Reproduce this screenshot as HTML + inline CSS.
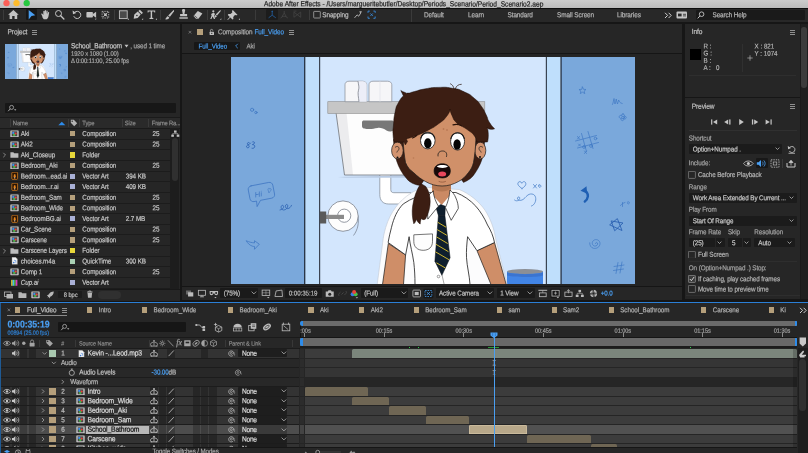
<!DOCTYPE html>
<html><head><meta charset="utf-8"><title>Adobe After Effects</title>
<style>
html,body{margin:0;padding:0;background:#161616;}
body{width:808px;height:453px;overflow:hidden;position:relative;font-family:"Liberation Sans",sans-serif;}
#r{position:absolute;left:0;top:0;width:808px;height:453px;overflow:hidden;background:#161616;will-change:transform;}
#r div,#r svg{position:absolute;}
.t{white-space:pre;transform-origin:50% 50%;-webkit-text-stroke:.18px currentColor;}
</style></head><body><div id="r">
<div style="left:0px;top:0px;width:808px;height:7.5px;background:linear-gradient(#cdcdcd,#bcbcbc);"></div>
<svg style="left:0;top:0" width="40" height="7" viewBox="0 0 40 7"><circle cx="6.500" cy="3.100" r="3.200" fill="#fc5f57"/><circle cx="16.500" cy="3.100" r="3.200" fill="#fdbc2e"/><circle cx="26.700" cy="3.100" r="3.200" fill="#28c840"/></svg>
<div class="t" style="left:264px;top:0px;height:8px;line-height:8px;font-size:6.63px;color:#222;transform:translate(0px,0.1px) scaleY(1.12) rotate(.03deg);">Adobe After Effects - /Users/margueritebutler/Desktop/Periods_Scenario/Period_Scenario2.aep</div>
<div style="left:0px;top:7.5px;width:808px;height:1px;background:#0e0e0e;"></div>
<div style="left:0px;top:8.5px;width:808px;height:13px;background:#282828;"></div>
<div style="left:3.3px;top:9.7px;width:0.8px;height:10.5px;background:#3b3b3b;"></div>
<div style="left:114.3px;top:9.7px;width:0.8px;height:10.5px;background:#3b3b3b;"></div>
<div style="left:160.3px;top:9.7px;width:0.8px;height:10.5px;background:#3b3b3b;"></div>
<div style="left:207px;top:9.7px;width:0.8px;height:10.5px;background:#3b3b3b;"></div>
<div style="left:224.4px;top:9.7px;width:0.8px;height:10.5px;background:#3b3b3b;"></div>
<div style="left:254.6px;top:9.7px;width:0.8px;height:10.5px;background:#3b3b3b;"></div>
<div style="left:309px;top:9.7px;width:0.8px;height:10.5px;background:#3b3b3b;"></div>
<div style="left:411.3px;top:8.5px;width:0.8px;height:13px;background:#3b3b3b;"></div>
<div style="left:25.7px;top:9.3px;width:11.6px;height:11.2px;background:#171717;border-radius:1px;"></div>
<div style="left:266.2px;top:9.3px;width:12.2px;height:11.2px;background:#1c1c1c;border-radius:1px;"></div>
<svg style="left:0px;top:7px;" width="420" height="16" viewBox="0 7 420 16"><g transform="translate(13.4 14.7)"><path d="M0-4.600l5.300 4.600h-1.500v4.300h-2.600v-3h-2.400v3h-2.600v-4.300h-1.500z" fill="#c4c4c4"/></g><g transform="translate(31.5 14.7)"><path d="M-2.800-4.800l6.600 5.400l-3.800.6l-2.800 3.600z" fill="#4a9ff2"/></g><g transform="translate(45.4 14.7)"><path transform="translate(0 .5) scale(.86)" d="M-3.600 1.200l-1.300-2.600c.6-.8 1.500-.5 1.900.3l.6.900v-4.300c.3-.8 1.200-.8 1.400 0v3l.2-4c.4-.8 1.300-.8 1.500 0v4l.5-3.500c.4-.7 1.200-.6 1.400.2l-.2 3.600l.8-2.300c.5-.6 1.200-.3 1.200.5l-.8 4.300c-.3 1.700-1.100 2.900-2.100 3.500h-3.300c-.8-.7-1.400-1.700-1.800-2.600z" fill="#c4c4c4"/></g><g transform="translate(59.5 14.7)"><circle cx="-1" cy="-1.200" r="3" fill="none" stroke="#c4c4c4" stroke-width="1"/><path d="M1.200 1l3.200 3.300" stroke="#c4c4c4" stroke-width="1.300" stroke-linecap="round"/></g><g transform="translate(77.2 14.7)"><path d="M-2.600-2.300a3.600 3.600 0 1 1-.8 3.800" fill="none" stroke="#c4c4c4" stroke-width="1"/><path d="M-4.600-4.200l.4 3.800l3.400-1.400z" fill="#c4c4c4"/></g><g transform="translate(91.2 14.7)"><rect x="-4.800" y="-2.800" width="6.500" height="5.600" rx="0.800" fill="#c4c4c4"/><path d="M1.700-.8l3.200-2.200v6l-3.200-2.200z" fill="#c4c4c4"/><path d="M5 4.800h-1.400l1.400-1.400z" fill="#c4c4c4"/></g><g transform="translate(105.4 14.7)"><rect x="-3.300" y="-3.300" width="6.600" height="6.600" fill="none" stroke="#c4c4c4" stroke-width="0.800" stroke-dasharray="1.300 1"/><path d="M-2.200-2.200l4.400 4.400M2.200-2.200l-4.400 4.400" stroke="#c4c4c4" stroke-width="0.900"/><rect x="-1.200" y="-1.200" width="2.400" height="2.400" fill="#c4c4c4"/></g><g transform="translate(123.3 14.7)"><rect x="-3.900" y="-3.900" width="7.800" height="7.800" fill="#4a4a4a" stroke="#c4c4c4" stroke-width="0.900"/><path d="M5.600 5h-1.400l1.400-1.400z" fill="#c4c4c4"/></g><g transform="translate(137.5 14.7)"><path d="M-3.800 4l.6-4.200l3.400-3l3 3l-3 3.400z" fill="#c4c4c4"/><path d="M.8-3.800l1.600-1.200l3 3l-1.200 1.600z" fill="#c4c4c4"/><circle cx="-.6" cy=".8" r=".8" fill="#2b2b2b"/><path d="M5.600 5h-1.400l1.400-1.400z" fill="#c4c4c4"/></g><g transform="translate(151.4 14.7)"><path d="M-3.800-4.200h7.600v2h-.8l-.3-1h-2v6.300l1.200.3v.8h-3.800v-.8l1.200-.3v-6.300h-2l-.3 1h-.8z" fill="#c4c4c4"/><path d="M5.600 5h-1.400l1.400-1.400z" fill="#c4c4c4"/></g><g transform="translate(169.4 14.7)"><path d="M4.200-4.600c.6.300.6.900.3 1.400l-4 5.300l-1.700-1.200z" fill="#c4c4c4"/><path d="M-1.700 1.500l1.600 1.300c-.3 1.500-2 2.200-4.300 1.800c1.300-.8 1.300-2.600 2.700-3.100z" fill="#c4c4c4"/></g><g transform="translate(183.6 14.7)"><path d="M-1.400-3.600a1.500 1.500 0 1 1 2.800 0l-.6 3h2.700v2.200h-7v-2.200h2.700z" fill="#c4c4c4"/><rect x="-4.200" y="2.600" width="8.400" height="1.400" fill="#c4c4c4"/></g><g transform="translate(197.9 14.7)"><path d="M-4.400 1.200l4.300-5l4.600 2.500l-4 5.400h-2.400z" fill="#c4c4c4"/><path d="M-3.600 1l3 2.300" stroke="#2b2b2b" stroke-width=".7"/></g><g transform="translate(215.7 14.7)"><circle cx="-2.400" cy="-3.400" r="1.100" fill="#c4c4c4"/><path d="M-4.600-.6l2.200-1.300l1.800 1l-1 2.200l1 2.900h-1.200l-1.300-2.300l-1.200 2.300h-1.100l1.300-3.300z" fill="#c4c4c4"/><path d="M4.600-4.600c.5.300.5.800.2 1.200l-3.400 4.200l-1.400-1z" fill="#c4c4c4"/><path d="M-.3 .2l1.400 1c-.3 1.200-1.400 1.700-3 1.400c1-.6.800-1.900 1.600-2.400z" fill="#c4c4c4"/><path d="M5.600 5h-1.400l1.400-1.400z" fill="#c4c4c4"/></g><g transform="translate(233 14.7)"><path d="M-.2-4.600l4.800 4.800l-1.200.4l-1.500-.3l-1.700 1.900l.2 2l-1 .6l-2-2l-2.600 2.400l-.4-.4l2.400-2.600l-2-2l.6-1l2 .2l1.900-1.700l-.3-1.500z" fill="#c4c4c4"/><path d="M7 5h-1.400l1.400-1.400z" fill="#c4c4c4"/></g><g transform="translate(272.2 14.7)"><path d="M0-3.800v4.300l-3.600 2.600M0 .5l3.600 2.600" fill="none" stroke="#2466ac" stroke-width=".75"/><path d="M-1-2.900l1-1.300l1 1.300z" fill="#2466ac"/></g><g transform="translate(284.2 14.7)"><path d="M0-3.800v2.600M-3.600 3.300l2.300-1.700M3.600 3.300l-2.300-1.700" fill="none" stroke="#484848" stroke-width=".8"/><path d="M0-1.600l2 3.200h-4z" fill="none" stroke="#484848" stroke-width=".7"/></g><g transform="translate(297.3 14.7)"><path d="M-3.400-2.600l6.800 5.200M-3.400 2.600l6.800-5.200M-3.400-2.600v5.200M3.400-2.600v5.200" fill="none" stroke="#444" stroke-width=".8"/><path d="M-3.800-3.600h3" stroke="#444" stroke-width=".8"/></g><g transform="translate(317 14.7)"><rect x="-3.300" y="-3.300" width="6.600" height="6.600" rx=".6" fill="none" stroke="#a8a8a8" stroke-width=".8"/></g><g transform="translate(357.7 14.7)"><path d="M-3.200 3.200l2.600-3l1.600 1.300l2.200-3.400" fill="none" stroke="#c4c4c4" stroke-width=".85"/><path d="M4-3.600l-2.700 .7l2 1.500z" fill="#c4c4c4"/></g><g transform="translate(371.6 14.7)"><path d="M-3.600-1.800v-1.800h1.800M1.800-3.600h1.800v1.800M3.600 1.800v1.800h-1.800M-1.800 3.600h-1.800v-1.800" fill="none" stroke="#3a97f0" stroke-width=".8"/><path d="M-1.300-1.300l2.600 2.600M1.300-1.300l-2.600 2.600" stroke="#3a97f0" stroke-width=".7"/></g></svg>
<div class="t" style="left:322px;top:9px;height:10px;line-height:10px;font-size:6.4px;color:#c0c0c0;transform:translate(0.3px,0.9px) scaleY(1.12) rotate(.03deg);letter-spacing:-0.1px;">Snapping</div>
<div class="t" style="left:424px;top:9px;height:10px;line-height:10px;font-size:6.45px;color:#b4b4b4;transform:translate(0px,0.9px) scaleY(1.12) rotate(.03deg);letter-spacing:-0.1px;">Default</div>
<div class="t" style="left:468px;top:9px;height:10px;line-height:10px;font-size:6.45px;color:#b4b4b4;transform:translate(0px,0.9px) scaleY(1.12) rotate(.03deg);letter-spacing:-0.1px;">Learn</div>
<div class="t" style="left:507px;top:9px;height:10px;line-height:10px;font-size:6.45px;color:#b4b4b4;transform:translate(0.5px,0.9px) scaleY(1.12) rotate(.03deg);letter-spacing:-0.1px;">Standard</div>
<div class="t" style="left:557px;top:9px;height:10px;line-height:10px;font-size:6.45px;color:#b4b4b4;transform:translate(0px,0.9px) scaleY(1.12) rotate(.03deg);letter-spacing:-0.1px;">Small Screen</div>
<div class="t" style="left:617px;top:9px;height:10px;line-height:10px;font-size:6.45px;color:#b4b4b4;transform:translate(0px,0.9px) scaleY(1.12) rotate(.03deg);letter-spacing:-0.1px;">Libraries</div>
<svg style="left:663.5px;top:11.5px;" width="9" height="7" viewBox="0 0 9 7"><path d="M1 .8l2.600 2.600l-2.600 2.600M4.600 .8l2.600 2.600l-2.600 2.600" fill="none" stroke="#d0d0d0" stroke-width="1"/></svg>
<svg style="left:675px;top:9px;" width="14" height="12" viewBox="0 0 14 12"><rect x="1.500" y="2.500" width="10.500" height="7" rx="1" fill="#c4c4c4"/><rect x="3" y="4.600" width="3.600" height="2.800" fill="#2b2b2b"/><path d="M8 5.300h3M8 6.900h3" stroke="#2b2b2b" stroke-width=".8"/></svg>
<div style="left:695.5px;top:10px;width:109px;height:10.3px;background:#1a1a1a;border-radius:1px;"></div>
<svg style="left:696px;top:10px;" width="10" height="10" viewBox="0 0 10 10"><circle cx="5.600" cy="4.200" r="2.300" fill="none" stroke="#c4c4c4" stroke-width=".9"/><path d="M4 5.900l-2.300 2.500" stroke="#c4c4c4" stroke-width="1"/></svg>
<div class="t" style="left:712px;top:10px;height:10px;line-height:10px;font-size:6.4px;color:#b8b8b8;transform:translate(0.5px,0px) scaleY(1.12) rotate(.03deg);letter-spacing:-0.1px;">Search Help</div>
<div style="left:0px;top:24px;width:179.8px;height:277px;background:#262626;"></div>
<div style="left:182.2px;top:24px;width:500.3px;height:276px;background:#262626;"></div>
<div style="left:685px;top:24px;width:123px;height:275px;background:#262626;"></div>
<div class="t" style="left:7px;top:27px;height:10px;line-height:10px;font-size:6.6px;color:#c0c0c0;transform:translate(0.5px,0px) scaleY(1.12) rotate(.03deg);letter-spacing:-0.1px;">Project</div>
<div style="left:32px;top:29.5px;width:5.2px;height:1px;background:#909090;"></div>
<div style="left:32px;top:31.5px;width:5.2px;height:1px;background:#909090;"></div>
<div style="left:32px;top:33.5px;width:5.2px;height:1px;background:#909090;"></div>
<svg style="left:4.5px;top:43.8px;" width="63" height="35.4" viewBox="230.500 56.500 404.500 227.500"><rect x="230.5" y="56.5" width="404.5" height="227.5" fill="#d3e6fd"/>
<!-- left door -->
<rect x="230.5" y="56.5" width="74" height="227.5" fill="#7aa8db"/>
<rect x="304.500" y="56.5" width="14.500" height="227.5" fill="#bfdffc"/>
<rect x="303.7" y="56.5" width="1.100" height="227.5" fill="#161c26"/>
<rect x="318.500" y="56.5" width="1.200" height="227.5" fill="#3a4452"/>
<!-- right door -->
<rect x="560.500" y="56.5" width="74.500" height="227.5" fill="#7aa8db"/>
<rect x="546" y="56.5" width="14.500" height="227.5" fill="#bfdffc"/>
<rect x="545.300" y="56.5" width="1.200" height="227.5" fill="#3a4452"/>
<rect x="560" y="56.5" width="1.100" height="227.5" fill="#161c26"/>
<!-- graffiti left door -->
<g fill="none" stroke="#3a72c0" stroke-width="0.700" stroke-linecap="round" stroke-linejoin="round">
<circle cx="251.600" cy="109.300" r="1.600"/><circle cx="255.400" cy="112" r="1.200"/>
<path d="M248.500 142c-1.300-.3-2 .8-1.300 1.800c.6.800 1.600 1.200 1.500 2.300c-.1 1.200-1.800 1.600-2.500.6c-.6-1 .3-1.900 1.400-2.300c1-.4 1.800-1 2.400-1.800M252.300 141.300c1.600-.3 2.300.9 1.300 1.900c-.5.500-1.200.700-1.700.900c1.500 0 2.600.8 2.300 2.200c-.3 1.300-1.700 1.800-2.700 1.500" stroke="#2c62b2" stroke-width="0.900"/>
<g transform="rotate(-11 261 192)"><path d="M252 183.500h18c2 0 3.500 1.500 3.500 3.500v9c0 2-1.500 3.500-3.500 3.500h-11.500l-4.500 5.500l.5-5.500h-2.500c-2 0-3.500-1.500-3.500-3.500v-9c0-2 1.500-3.500 3.500-3.500z"/><path d="M268 190c.3-1.200 1.800-1 1.700.2c.9-.8 2 .2 1.200 1.200l-2.400 2.200z" stroke-width="0.500"/></g>
<path d="M279.500 209.500c2.200-.3 3.800-1.800 3.600-3.600c-.2-1.300-1.800-1.500-2.300-.2c-.6 1.600.3 3.700 2.200 3.800c2.400.1 4-2 4.300-4c.2-1.500-1.300-2.200-2.100-.9c-.9 1.600.2 3.600 2 3.500c1.800-.1 3-1.500 3.800-3.300" stroke="#2c62b2" stroke-width="0.800"/>
<path d="M258.500 243.500l-4.500-3.300v2.200c-3-.3-5.500-.8-8.300-2.200c1.500 2.600 3.500 4.500 6 5.400c.8.300 1.500.400 2.300.400v2.400z"/>
</g>
<text x="254" y="195.800" font-family="Liberation Sans, sans-serif" font-size="7.500" font-style="italic" fill="#3a72c0" transform="rotate(-11 261 192)">Hi</text>
<!-- graffiti right door -->
<g fill="none" stroke="#3f78c4" stroke-width="0.7" stroke-linecap="round" stroke-linejoin="round">
<path d="M582 86.500l1 2.300l2.500.2l-1.900 1.600l.7 2.500l-2.300-1.400l-2.200 1.400l.6-2.500l-1.900-1.600l2.500-.2z"/>
<path d="M612 104c1-2 1-5 1.500-6c.5 2 .3 4 1 5.500c.8-2 .8-4 1.300-5c.5 2 .4 3.500 1.200 5c.6-1.500.7-3 1.200-4c.5 1.500 1 3 3.500 3.500"/>
<circle cx="622.500" cy="117" r="1.300"/><path d="M622.500 113.500c1.500 0 2 1.500 1 2.300c1.500-.5 2.800.8 2 2c-.8 1-2 .8-2.300 0c.5 1.500-.5 2.700-1.700 2.300c-1.200-.4-1.300-1.800-.5-2.500c-1.300.6-2.600-.3-2.300-1.600c.3-1.200 1.700-1.400 2.500-.7c-.6-1 .1-1.800 1.300-1.800z"/>
<path d="M581 133l5 18M587.500 131l5 17M575 140.500l21-5.500M577 147.500l21-5.500"/>
<circle cx="583.500" cy="146.500" r="1.400"/><circle cx="590.500" cy="145.500" r="1.400"/><circle cx="595" cy="138" r="1.300"/>
<path d="M577 136l2 2.500M579 136l-2 2.500M584 150.500l2 2.500M586 150.500l-2 2.500M578 143.500l2 2M580 143.500l-2 2"/>
<path d="M620 205c1.500-2 3-2.500 4.500-3M622 202v4M627 201.500c1.200-.8 2.300.2 1.800 1.300c-.5 1-2 .8-2-.3"/>
<path d="M617 218.500l4.500 11.500l-12-5.500zM611 220.500l11.500 2l-8 7.500z" stroke="#2c62b2" stroke-width="0.900"/>
<path d="M595 243c0-1.200 1.500-1.500 2-.5c.8 1.500-1 3.500-3 3c-2.500-.6-3-4-1-5.500c2.500-2 6.500-.5 6.500 3c0 3.500-3.500 5.500-6.500 4.800c-2.500-.6-4-3-3.800-5.500"/>
<path d="M617.500 262l-2 11M621.500 261.500l-2 11M613.500 266l10-1.500M613 270l10-1.500"/>
</g>
<path d="M584.300 201c3.500-2.500 4.500-7.500.5-10.500" fill="none" stroke="#1f5fb3" stroke-width="2.400" stroke-linecap="round"/><path d="M580 190.300l6-4.600l.6 7.200z" fill="#1f5fb3"/>
<!-- wall graffiti -->
<g fill="none" stroke="#3f78c4" stroke-width="0.7" stroke-linecap="round" stroke-linejoin="round">
<path d="M521.500 188c-3-2-5-4-3.800-6c1-1.500 3-1 3.600.8c.8-2 3.400-2.400 4 0c.5 2-1.600 3.800-3.800 5.200z"/>
<path d="M533 184l3 3.500M536 184l-3 3.500M538.500 184.500c1.300-.5 2.300.5 1.800 1.700c-.5 1-2 .8-2.200-.4c-.1-.6.100-1 .4-1.300z"/>
<path d="M514 199.500c1.500 1.500 4 1 5-1c1-2-1.500-3-2-1c-.5 2.500 3 3 5.500 1.500c3-2 4.500-6 9-5.500c4 .5 4.500 5.500 3 8.500c-.8 1.800-2 3-3.500 3.500"/>
</g>
<!-- toilet tank -->
<path d="M379.300 172v22c0 6 3 9.500 9 9.500h22v-11.300h-17c-2 0-3-1-3-3v-17z" fill="#fff" stroke="#7d8590" stroke-width="0.700"/>
<path d="M337 176.500l8 .8h80v-3z" fill="#b9cbe4"/>
<path d="M335.500 112l8.500 62.500h81v-62.500z" fill="#fdfdfd"/>
<path d="M335.500 112l8.500 62.500l8.500 0l-6.500-62.500z" fill="#ececee"/>
<path d="M335.500 112l8.500 62.500h81" fill="none" stroke="#6c7178" stroke-width="0.800"/>
<rect x="327.300" y="101.200" width="157" height="11.800" fill="#c6c6c6" stroke="#8e8e8e" stroke-width="0.600"/>
<path d="M361.500 121.800c0-1.200.8-1.800 2-1.800h28c1.500 0 2 1 2 2v7c-2 2.500-5 2.500-7.500 1c-3-2-6-3-9-2.500c-3 .5-5 1-8 1c-4 0-7.500 0-7.500-3z" fill="#787878"/>
<!-- toilet rolls on tank -->
<path d="M344.500 101.200v-17c0-2 1.500-3.500 4-3.500h13.500c2.500 0 4.200 1.500 4.200 3.500v17z" fill="#f6f6f8" stroke="#858993" stroke-width="0.700"/>
<path d="M357.500 80.700c.5 4 1.500 6 .5 9c-1 3 0 7 .5 11.500h7.700v-17c0-2-1.700-3.500-4.200-3.500z" fill="#eceef8"/>
<path d="M357.500 80.700c.5 4 1.500 6 .5 9c-1 3 0 7 .5 11.500" fill="none" stroke="#6e727c" stroke-width="0.700"/>
<path d="M368.500 101.200v-17c0-2 1.500-3.500 4-3.500h14.500c2.500 0 4.300 1.500 4.300 3.500v17z" fill="#f6f6f8" stroke="#858993" stroke-width="0.700"/>
<path d="M379.500 80.700v20.500" stroke="#dfe1e8" stroke-width="0.600"/>
<!-- wall roll holder -->
<path d="M357.500 215c1 7.500 0 14-4.500 20" fill="none" stroke="#717a88" stroke-width="0.700"/>
<circle cx="342.500" cy="215.600" r="15.200" fill="#fdfdfd" stroke="#7a808b" stroke-width="0.800"/>
<circle cx="343.700" cy="215.200" r="6.600" fill="#fff" stroke="#7a808b" stroke-width="0.800"/>
<rect x="325" y="214.300" width="18.500" height="4.200" fill="#8a8a8a"/>
<rect x="319.400" y="211" width="6.300" height="12" fill="#5a5a5a"/>
<!-- blue cup -->
<path d="M506.500 271h36v13h-36z" fill="#4285e6"/>
<ellipse cx="524.500" cy="271" rx="18" ry="2.600" fill="#8b8f96"/>
<path d="M506.500 272c5 2.200 31 2.200 36 0v3c-5 2-31 2-36 0z" fill="#3a74d0"/>
<!-- halo behind body -->
<path d="M428 187c-8 1-14 3-18 6c-11 7-20 18-24.800 34c-1.500 5-2.500 10-3 15l-5.500 42h130l-11.500-45.500c-1.500-10-5-20-10.500-28.500c-6-9-16-17-26-21z" fill="#fcfcfd" stroke="#c3c9d3" stroke-width="0.600"/>
<!-- arms -->
<path d="M387.800 243l17.300 11.400l-2.100 29.600h-21z" fill="#cf8e68" stroke="#1a1a1a" stroke-width="0.700" stroke-linejoin="round"/>
<path d="M476.500 250.200l17.500-8.200l11.700 42h-15.200z" fill="#cf8e68" stroke="#1a1a1a" stroke-width="0.700" stroke-linejoin="round"/>
<!-- shirt body -->
<path d="M429.700 192c-10 2.500-19 6-26.900 11.400c-6 6-9.500 14-11.800 23.400c-1.400 5-2.400 10-3.400 15.200l17.500 12.400l3.500-18.200c1 8.500 3.500 17 4.700 25.700c.8 7 1.200 14 1.200 22.100h55c-.5-9-3-18-3.500-26.800c-.3-7 .3-14 1.100-21l9.400 14l17.500-8.200c-1.200-6-3.500-12-7-17.500c-3-7-7-13.500-11.700-18.800c-5.500-6-12-10.500-19.900-13.700z" fill="#fff" stroke="#1a1a1a" stroke-width="0.800" stroke-linejoin="round"/>
<!-- placket + button -->
<path d="M441.500 274.500l2.200 9.500" stroke="#555" stroke-width="0.500" fill="none"/>
<circle cx="438" cy="276" r="1.300" fill="#fff" stroke="#444" stroke-width="0.500"/>
<!-- pocket -->
<path d="M413.300 234.300l18.700-.9v7.600c0 5.500-3.500 8.800-9.300 8.800c-5.700 0-9.400-3.300-9.400-8.800z" fill="#fdfdfd" stroke="#1a1a1a" stroke-width="0.600"/>
<!-- neck -->
<path d="M431.500 180v14l9.700 10.500l9.300-11v-14z" fill="#cb8a64"/>
<path d="M431.500 183v5c6 4 14 4 19 0v-5z" fill="#b57853"/>
<!-- tie -->
<path d="M437.900 215.100l-3.500 45.600l7 14.100l8.200-17.600l-5.200-42.100z" fill="#0f1f2e" stroke="#070c12" stroke-width="0.500" stroke-linejoin="round"/>
<path d="M435.500 206.900l4.700-2.800l4.700 1.600l-.5 9.400h-6.500z" fill="#0f1f2e" stroke="#070c12" stroke-width="0.500" stroke-linejoin="round"/>
<g stroke="#e3c62f" stroke-width="0.900" fill="none" stroke-linecap="round">
<path d="M437.600 222l7.600 4.500M437 229.300l9 5.300M436.400 236.600l10.400 6.200M435.800 244l11.800 7M435.300 251.500l12.800 7.500M436.300 262.500l8.200 4.800"/>
</g>
<!-- collar -->
<path d="M433.200 190.500c-3 1.500-5 4-6.500 7.500l.6 20.600l10.600-12.900c-2.500-4-4.500-9-5.300-15.200z" fill="#fff" stroke="#1a1a1a" stroke-width="0.700" stroke-linejoin="round"/>
<path d="M449.500 189.500c2.500 2 4.500 4.500 5.900 8c1.500 3.500 2.400 7 2.400 10.500l-7.100 11.800l-5.800-12.800c2.500-5 4-11 4.600-17.500z" fill="#fff" stroke="#1a1a1a" stroke-width="0.700" stroke-linejoin="round"/>
<!-- hair back (sides, behind ears/face) -->
<path d="M393 139L406 139L426 176L420 185C414 184.500 409 182 406 178C397 168 393 154 393 139zM484.500 139L474 139L457 174L463 182C468 180 472 177 475 172C479 166 481.500 160 482.500 155z" fill="#3c1e13" stroke="#1a0d08" stroke-width="0.400"/>
<!-- ponytail -->
<path d="M420.300 183c-4 6-7 14-8.200 22.700c-.8 6-.3 12 1.200 17.600c1.500-1.200 2.300-3 2.600-4.800c.8 2.500 2 4 3.800 5c0-2.200.4-4 1.300-5.600c.8 1.200 2.200 1.700 4 .7c3-5.500 4.700-11.500 4.700-17.600c0-6-1.500-11-4.400-15z" fill="#3c1e13" stroke="#1a0d08" stroke-width="0.500" stroke-linejoin="round"/>
<!-- ears -->
<ellipse cx="396.900" cy="150" rx="5.800" ry="8.400" fill="#d39470" stroke="#1a1a1a" stroke-width="0.700"/>
<ellipse cx="479.800" cy="150" rx="5.500" ry="8.400" fill="#d39470" stroke="#1a1a1a" stroke-width="0.700"/>
<path d="M394.500 147c1.800-1.800 4-1 4 1c0 1.800-1.700 2.200-2.200 4" fill="none" stroke="#1a1a1a" stroke-width="0.700"/>
<path d="M482.500 147c-1.800-1.800-4-1-4 1c0 1.800 1.700 2.200 2.200 4" fill="none" stroke="#1a1a1a" stroke-width="0.700"/>
<circle cx="397" cy="157" r="1" fill="#111"/><circle cx="479.500" cy="156.500" r="1" fill="#111"/>
<!-- face -->
<path d="M403 120c-1 12-.5 28 2 42c2 5 5 8 8 10c4 4 8 7 12 9c5 3 11 4.500 16.600 4.500c5.500 0 11-1.500 16.400-4.500c4-2 7-5 10-9c2.500-3 4-6 5-10c2.500-14 3-30 2-42c-10-14-24-20-36-20c-13 0-26 6-36 20z" fill="#d09069" stroke="#1a1a1a" stroke-width="0.700"/>
<!-- hair top -->
<path d="M400.3 89.9C400.3 89.9 401.4 90.9 404.0 91.8C406.6 92.7 404.7 92.9 408.0 92.6C411.3 92.3 408.3 92.4 414.0 91.0C419.7 89.6 417.1 89.7 425.0 88.3C432.9 86.9 428.6 87.1 437.6 86.9C446.6 86.7 443.2 86.3 452.0 87.8C460.8 89.3 456.7 88.1 464.0 91.5C471.3 94.9 468.3 93.2 474.0 98.0C479.7 102.8 477.2 100.7 481.0 106.0C484.8 111.3 482.8 108.7 485.5 114.0C488.2 119.3 486.1 117.3 489.0 122.0C491.9 126.7 494.2 128.2 494.2 128.2C494.2 128.2 492.5 129.1 490.0 128.8C487.5 128.5 486.8 127.2 486.8 127.2C486.8 127.2 487.7 129.2 487.8 134.0C487.9 138.8 487.0 141.5 487.0 141.5C487.0 141.5 476.0 141.5 476.0 141.5C476.0 141.5 476.9 139.5 474.0 135.5C471.1 131.5 471.7 132.9 467.4 129.6C463.1 126.3 465.0 128.1 461.0 125.5C457.0 122.9 458.7 125.2 455.5 121.7C452.3 118.2 453.5 119.3 451.5 115.0C449.5 110.7 449.5 108.7 449.5 108.7C449.5 108.7 450.0 111.0 446.0 116.0C442.0 121.0 443.6 119.1 437.6 123.6C431.6 128.1 434.0 126.2 428.0 129.5C422.0 132.8 425.0 131.3 419.7 133.6C414.4 135.9 416.6 134.9 412.0 136.5C407.4 138.1 405.8 138.5 405.8 138.5C405.8 138.5 407.0 141.0 407.0 141.0C407.0 141.0 404.8 144.5 404.8 144.5C404.8 144.5 403.5 141.5 403.5 141.5C403.5 141.5 400.3 141.7 397.0 141.5C393.7 141.3 393.5 141.0 393.5 141.0C393.5 141.0 392.7 138.1 392.5 133.0C392.3 127.9 392.2 132.6 392.9 125.6C393.6 118.6 392.8 119.9 394.5 112.0C396.2 104.1 395.2 107.5 398.0 102.0C400.8 96.5 403.0 95.5 403.0 95.5C403.0 95.5 400.3 89.9 400.3 89.9z" fill="#3c1e13" stroke="#1a0d08" stroke-width="0.500" stroke-linejoin="round"/>
<path d="M453.500 88.300c-.5-2.500-1.500-4-3.500-5M454.800 88.300c1-3 3-4.500 6-4.500" fill="none" stroke="#2a140c" stroke-width="0.700" stroke-linecap="round"/>
<!-- eyebrows -->
<path d="M412 137.500c1.500-.5 3-1.500 4-2.500M452.500 124.300c3-.8 6-.5 8.500 1" fill="none" stroke="#2a140c" stroke-width="1.200" stroke-linecap="round"/>
<!-- eyes -->
<ellipse cx="427.300" cy="140" rx="7.300" ry="8.400" fill="#fff" stroke="#1a1a1a" stroke-width="0.800"/>
<ellipse cx="457.100" cy="140.800" rx="7" ry="8.800" fill="#fff" stroke="#1a1a1a" stroke-width="0.800"/>
<path d="M420.300 138c1.500-7.500 12.500-7.500 14 0M450.300 138.500c1.500-8 12-8 13.600 0" fill="none" stroke="#1a1a1a" stroke-width="1.100"/>
<ellipse cx="427.300" cy="142.800" rx="3.700" ry="5.100" fill="#050505"/>
<ellipse cx="456.600" cy="144" rx="3.700" ry="5.300" fill="#050505"/>
<!-- nose -->
<path d="M437.500 155.500c-.5-3 1.500-5 4.500-5c3 0 5 2 4 5.500" fill="none" stroke="#1a1a1a" stroke-width="0.800" stroke-linecap="round"/>
<!-- mouth -->
<path d="M433.600 170.500c0-4.500 3.300-7.200 8.200-7.200c4.900 0 8 2.700 8 7.200c0 4.300-3.200 6.900-7.800 6.900c-4.900 0-8.400-2.600-8.400-6.900z" fill="#170909" stroke="#0c0c0c" stroke-width="0.700"/>
<path d="M436.300 165.800c3-1.600 8-1.600 11.200 0c-1 1.100-3 1.700-5.500 1.700c-2.700 0-4.700-.6-5.700-1.700z" fill="#fff"/>
<ellipse cx="441.700" cy="173.600" rx="4" ry="2.500" fill="#e8475c"/>
<path d="M438.500 181c2 .9 4.500 .9 6.500 0" fill="none" stroke="#8a5236" stroke-width="0.700" stroke-linecap="round"/>
<!-- freckles -->
<circle cx="443" cy="128.500" r="0.900" fill="#b97a55"/><circle cx="446.500" cy="129.500" r="0.900" fill="#b97a55"/><circle cx="413" cy="157.500" r="0.800" fill="#b97a55"/>
</svg>
<div class="t" style="left:71px;top:41px;height:10px;line-height:10px;font-size:6.6px;color:#c8c8c8;transform:translate(0px,0px) scaleY(1.12) rotate(.03deg);letter-spacing:-0.1px;">School_Bathroom</div>
<svg style="left:124.3px;top:44px;" width="5" height="4" viewBox="0 0 5 4"><path d="M.5 .8h4l-2 2.600z" fill="#c4c4c4"/></svg>
<div class="t" style="left:130px;top:41px;height:10px;line-height:10px;font-size:6.3px;color:#a8a8a8;transform:translate(0.3px,0px) scaleY(1.12) rotate(.03deg);letter-spacing:-0.1px;">, used 1 time</div>
<div class="t" style="left:71px;top:48px;height:10px;line-height:10px;font-size:5.9px;color:#a8a8a8;transform:translate(0px,0.4px) scaleY(1.12) rotate(.03deg);letter-spacing:-0.1px;">1920 x 1080 (1.00)</div>
<div class="t" style="left:71px;top:55px;height:10px;line-height:10px;font-size:5.9px;color:#a8a8a8;transform:translate(0px,0.7px) scaleY(1.12) rotate(.03deg);letter-spacing:-0.1px;">Δ 0:00:11:00, 25.00 fps</div>
<div style="left:5px;top:102.9px;width:171.3px;height:10.1px;background:#171717;border-radius:1px;"></div>
<svg style="left:7px;top:103.5px;" width="12" height="9" viewBox="0 0 12 9"><circle cx="4.600" cy="3.400" r="2" fill="none" stroke="#b0b0b0" stroke-width=".8"/><path d="M3.200 4.900l-2 2.300" stroke="#b0b0b0" stroke-width=".9"/><path d="M7 5.300h2.400l-1.200 1.500z" fill="#b0b0b0"/></svg>
<div style="left:0px;top:117.7px;width:179.5px;height:10px;background:#2a2a2a;"></div>
<div style="left:0px;top:117.2px;width:179.5px;height:0.6px;background:#1a1a1a;"></div>
<div style="left:0px;top:127.6px;width:179.5px;height:0.7px;background:#1a1a1a;"></div>
<div style="left:9.7px;top:119px;width:0.6px;height:7.5px;background:#3a3a3a;"></div>
<div style="left:68.4px;top:119px;width:0.6px;height:7.5px;background:#3a3a3a;"></div>
<div style="left:78.8px;top:119px;width:0.6px;height:7.5px;background:#3a3a3a;"></div>
<div style="left:122.4px;top:119px;width:0.6px;height:7.5px;background:#3a3a3a;"></div>
<div style="left:148.4px;top:119px;width:0.6px;height:7.5px;background:#3a3a3a;"></div>
<div class="t" style="left:12px;top:118px;height:10px;line-height:10px;font-size:5.8px;color:#8c8c8c;transform:translate(0.8px,0px) scaleY(1.12) rotate(.03deg);letter-spacing:-0.1px;">Name</div>
<svg style="left:57.5px;top:120.5px;" width="8" height="5" viewBox="0 0 8 5"><path d="M.3 4.200l3.500-3.400l3.500 3.400z" fill="#2d8ceb"/></svg>
<svg style="left:70px;top:119.3px;" width="8" height="8" viewBox="0 0 8 8"><path d="M.8 .8h3l3.400 3.400l-3 3l-3.400-3.400z" fill="#b4b4b4"/><circle cx="2.200" cy="2.200" r=".7" fill="#2a2a2a"/></svg>
<div class="t" style="left:82px;top:118px;height:10px;line-height:10px;font-size:5.8px;color:#8c8c8c;transform:translate(0.3px,0px) scaleY(1.12) rotate(.03deg);letter-spacing:-0.1px;">Type</div>
<div class="t" style="left:124px;top:118px;height:10px;line-height:10px;font-size:5.8px;color:#8c8c8c;transform:translate(0.7px,0px) scaleY(1.12) rotate(.03deg);letter-spacing:-0.1px;">Size</div>
<div class="t" style="left:151px;top:118px;height:10px;line-height:10px;font-size:5.8px;color:#8c8c8c;transform:translate(0.8px,0px) scaleY(1.12) rotate(.03deg);letter-spacing:-0.2px;">Frame Ra...</div>
<div style="left:0px;top:138.8px;width:170.4px;height:0.6px;background:#1c1c1c;"></div>
<svg style="left:10.2px;top:129.9px;" width="9" height="7.6" viewBox="0 0 9 7.6"><rect x=".3" y=".4" width="8.400" height="6.800" rx=".6" fill="#cfcfcf"/><rect x="1.700" y="1.300" width="5.600" height="5" fill="#474747"/><path d="M.9 1.300v5M8.100 1.300v5" stroke="#6a6a6a" stroke-width=".5" stroke-dasharray=".8 .7"/><circle cx="3.300" cy="2.900" r="1.150" fill="#3f8ff0"/><circle cx="5.600" cy="3.600" r="1.150" fill="#e8433a"/><circle cx="4.200" cy="4.900" r="1.150" fill="#48b848"/></svg>
<div class="t" style="left:20px;top:128px;height:10px;line-height:10px;font-size:6.3px;color:#c6c6c6;transform:translate(0.8px,0.7px) scaleY(1.12) rotate(.03deg);letter-spacing:-0.1px;">Aki</div>
<div style="left:70.3px;top:131.1px;width:5.2px;height:5.2px;background:#b59f7b;"></div>
<div class="t" style="left:82px;top:128px;height:10px;line-height:10px;font-size:6.3px;color:#c6c6c6;transform:translate(0.3px,0.7px) scaleY(1.12) rotate(.03deg);letter-spacing:-0.1px;">Composition</div>
<div class="t" style="left:152px;top:128px;height:10px;line-height:10px;font-size:6.3px;color:#c6c6c6;transform:translate(0.6px,0.7px) scaleY(1.12) rotate(.03deg);letter-spacing:-0.1px;">25</div>
<div style="left:0px;top:149.43px;width:170.4px;height:0.6px;background:#1c1c1c;"></div>
<svg style="left:10.2px;top:140.53px;" width="9" height="7.6" viewBox="0 0 9 7.6"><rect x=".3" y=".4" width="8.400" height="6.800" rx=".6" fill="#cfcfcf"/><rect x="1.700" y="1.300" width="5.600" height="5" fill="#474747"/><path d="M.9 1.300v5M8.100 1.300v5" stroke="#6a6a6a" stroke-width=".5" stroke-dasharray=".8 .7"/><circle cx="3.300" cy="2.900" r="1.150" fill="#3f8ff0"/><circle cx="5.600" cy="3.600" r="1.150" fill="#e8433a"/><circle cx="4.200" cy="4.900" r="1.150" fill="#48b848"/></svg>
<div class="t" style="left:20px;top:139px;height:10px;line-height:10px;font-size:6.3px;color:#c6c6c6;transform:translate(0.8px,0.33px) scaleY(1.12) rotate(.03deg);letter-spacing:-0.1px;">Aki2</div>
<div style="left:70.3px;top:141.73px;width:5.2px;height:5.2px;background:#b59f7b;"></div>
<div class="t" style="left:82px;top:139px;height:10px;line-height:10px;font-size:6.3px;color:#c6c6c6;transform:translate(0.3px,0.33px) scaleY(1.12) rotate(.03deg);letter-spacing:-0.1px;">Composition</div>
<div class="t" style="left:152px;top:139px;height:10px;line-height:10px;font-size:6.3px;color:#c6c6c6;transform:translate(0.6px,0.33px) scaleY(1.12) rotate(.03deg);letter-spacing:-0.1px;">25</div>
<div style="left:0px;top:160.06px;width:170.4px;height:0.6px;background:#1c1c1c;"></div>
<svg style="left:10.2px;top:151.16px;" width="9" height="7.6" viewBox="0 0 9 7.6"><path d="M.4 1.200h3l.8 1h4.200v4.600h-8z" fill="#bdbdbd"/></svg>
<div class="t" style="left:20px;top:149px;height:10px;line-height:10px;font-size:6.3px;color:#c6c6c6;transform:translate(0.8px,0.96px) scaleY(1.12) rotate(.03deg);letter-spacing:-0.1px;">Aki_Closeup</div>
<div style="left:70.3px;top:152.36px;width:5.2px;height:5.2px;background:#e8d83a;"></div>
<div class="t" style="left:82px;top:149px;height:10px;line-height:10px;font-size:6.3px;color:#c6c6c6;transform:translate(0.3px,0.96px) scaleY(1.12) rotate(.03deg);letter-spacing:-0.1px;">Folder</div>
<svg style="left:1.5px;top:151.96px;" width="5" height="6" viewBox="0 0 5 6"><path d="M1.300 .8l2.200 2.200l-2.200 2.200" fill="none" stroke="#a0a0a0" stroke-width=".8"/></svg>
<div style="left:0px;top:170.69px;width:170.4px;height:0.6px;background:#1c1c1c;"></div>
<svg style="left:10.2px;top:161.79px;" width="9" height="7.6" viewBox="0 0 9 7.6"><rect x=".3" y=".4" width="8.400" height="6.800" rx=".6" fill="#cfcfcf"/><rect x="1.700" y="1.300" width="5.600" height="5" fill="#474747"/><path d="M.9 1.300v5M8.100 1.300v5" stroke="#6a6a6a" stroke-width=".5" stroke-dasharray=".8 .7"/><circle cx="3.300" cy="2.900" r="1.150" fill="#3f8ff0"/><circle cx="5.600" cy="3.600" r="1.150" fill="#e8433a"/><circle cx="4.200" cy="4.900" r="1.150" fill="#48b848"/></svg>
<div class="t" style="left:20px;top:160px;height:10px;line-height:10px;font-size:6.3px;color:#c6c6c6;transform:translate(0.8px,0.59px) scaleY(1.12) rotate(.03deg);letter-spacing:-0.1px;">Bedroom_Aki</div>
<div style="left:70.3px;top:162.99px;width:5.2px;height:5.2px;background:#b59f7b;"></div>
<div class="t" style="left:82px;top:160px;height:10px;line-height:10px;font-size:6.3px;color:#c6c6c6;transform:translate(0.3px,0.59px) scaleY(1.12) rotate(.03deg);letter-spacing:-0.1px;">Composition</div>
<div class="t" style="left:152px;top:160px;height:10px;line-height:10px;font-size:6.3px;color:#c6c6c6;transform:translate(0.6px,0.59px) scaleY(1.12) rotate(.03deg);letter-spacing:-0.1px;">25</div>
<div style="left:0px;top:181.32px;width:170.4px;height:0.6px;background:#1c1c1c;"></div>
<svg style="left:10.2px;top:172.42px;" width="9" height="7.6" viewBox="0 0 9 7.6"><rect x="1.800" y=".2" width="5.800" height="7.200" rx=".9" fill="#2a1505" stroke="#e8871e" stroke-width=".7"/><path d="M3.500 5.200l.5-3h1.400l.5 3z" fill="#e8871e"/><rect x="4.200" y="5.300" width="1" height="1.200" fill="#f4e8d8"/></svg>
<div class="t" style="left:20px;top:171px;height:10px;line-height:10px;font-size:6.3px;color:#c6c6c6;transform:translate(0.8px,0.22px) scaleY(1.12) rotate(.03deg);letter-spacing:-0.1px;">Bedroom...ead.ai</div>
<div style="left:70.3px;top:173.62px;width:5.2px;height:5.2px;background:#a9b0d6;"></div>
<div class="t" style="left:82px;top:171px;height:10px;line-height:10px;font-size:6.3px;color:#c6c6c6;transform:translate(0.3px,0.22px) scaleY(1.12) rotate(.03deg);letter-spacing:-0.1px;">Vector Art</div>
<div class="t" style="left:125px;top:171px;height:10px;line-height:10px;font-size:6.3px;color:#c6c6c6;transform:translate(0.8px,0.22px) scaleY(1.12) rotate(.03deg);letter-spacing:-0.1px;">394 KB</div>
<div style="left:0px;top:191.95px;width:170.4px;height:0.6px;background:#1c1c1c;"></div>
<svg style="left:10.2px;top:183.05px;" width="9" height="7.6" viewBox="0 0 9 7.6"><rect x="1.800" y=".2" width="5.800" height="7.200" rx=".9" fill="#2a1505" stroke="#e8871e" stroke-width=".7"/><path d="M3.500 5.200l.5-3h1.400l.5 3z" fill="#e8871e"/><rect x="4.200" y="5.300" width="1" height="1.200" fill="#f4e8d8"/></svg>
<div class="t" style="left:20px;top:181px;height:10px;line-height:10px;font-size:6.3px;color:#c6c6c6;transform:translate(0.8px,0.85px) scaleY(1.12) rotate(.03deg);letter-spacing:-0.1px;">Bedroom...r.ai</div>
<div style="left:70.3px;top:184.25px;width:5.2px;height:5.2px;background:#a9b0d6;"></div>
<div class="t" style="left:82px;top:181px;height:10px;line-height:10px;font-size:6.3px;color:#c6c6c6;transform:translate(0.3px,0.85px) scaleY(1.12) rotate(.03deg);letter-spacing:-0.1px;">Vector Art</div>
<div class="t" style="left:125px;top:181px;height:10px;line-height:10px;font-size:6.3px;color:#c6c6c6;transform:translate(0.8px,0.85px) scaleY(1.12) rotate(.03deg);letter-spacing:-0.1px;">409 KB</div>
<div style="left:0px;top:202.58px;width:170.4px;height:0.6px;background:#1c1c1c;"></div>
<svg style="left:10.2px;top:193.68px;" width="9" height="7.6" viewBox="0 0 9 7.6"><rect x=".3" y=".4" width="8.400" height="6.800" rx=".6" fill="#cfcfcf"/><rect x="1.700" y="1.300" width="5.600" height="5" fill="#474747"/><path d="M.9 1.300v5M8.100 1.300v5" stroke="#6a6a6a" stroke-width=".5" stroke-dasharray=".8 .7"/><circle cx="3.300" cy="2.900" r="1.150" fill="#3f8ff0"/><circle cx="5.600" cy="3.600" r="1.150" fill="#e8433a"/><circle cx="4.200" cy="4.900" r="1.150" fill="#48b848"/></svg>
<div class="t" style="left:20px;top:192px;height:10px;line-height:10px;font-size:6.3px;color:#c6c6c6;transform:translate(0.8px,0.48px) scaleY(1.12) rotate(.03deg);letter-spacing:-0.1px;">Bedroom_Sam</div>
<div style="left:70.3px;top:194.88px;width:5.2px;height:5.2px;background:#b59f7b;"></div>
<div class="t" style="left:82px;top:192px;height:10px;line-height:10px;font-size:6.3px;color:#c6c6c6;transform:translate(0.3px,0.48px) scaleY(1.12) rotate(.03deg);letter-spacing:-0.1px;">Composition</div>
<div class="t" style="left:152px;top:192px;height:10px;line-height:10px;font-size:6.3px;color:#c6c6c6;transform:translate(0.6px,0.48px) scaleY(1.12) rotate(.03deg);letter-spacing:-0.1px;">25</div>
<div style="left:0px;top:213.21px;width:170.4px;height:0.6px;background:#1c1c1c;"></div>
<svg style="left:10.2px;top:204.31px;" width="9" height="7.6" viewBox="0 0 9 7.6"><rect x=".3" y=".4" width="8.400" height="6.800" rx=".6" fill="#cfcfcf"/><rect x="1.700" y="1.300" width="5.600" height="5" fill="#474747"/><path d="M.9 1.300v5M8.100 1.300v5" stroke="#6a6a6a" stroke-width=".5" stroke-dasharray=".8 .7"/><circle cx="3.300" cy="2.900" r="1.150" fill="#3f8ff0"/><circle cx="5.600" cy="3.600" r="1.150" fill="#e8433a"/><circle cx="4.200" cy="4.900" r="1.150" fill="#48b848"/></svg>
<div class="t" style="left:20px;top:203px;height:10px;line-height:10px;font-size:6.3px;color:#c6c6c6;transform:translate(0.8px,0.11px) scaleY(1.12) rotate(.03deg);letter-spacing:-0.1px;">Bedroom_Wide</div>
<div style="left:70.3px;top:205.51px;width:5.2px;height:5.2px;background:#b59f7b;"></div>
<div class="t" style="left:82px;top:203px;height:10px;line-height:10px;font-size:6.3px;color:#c6c6c6;transform:translate(0.3px,0.11px) scaleY(1.12) rotate(.03deg);letter-spacing:-0.1px;">Composition</div>
<div class="t" style="left:152px;top:203px;height:10px;line-height:10px;font-size:6.3px;color:#c6c6c6;transform:translate(0.6px,0.11px) scaleY(1.12) rotate(.03deg);letter-spacing:-0.1px;">25</div>
<div style="left:0px;top:223.84px;width:170.4px;height:0.6px;background:#1c1c1c;"></div>
<svg style="left:10.2px;top:214.94px;" width="9" height="7.6" viewBox="0 0 9 7.6"><rect x="1.800" y=".2" width="5.800" height="7.200" rx=".9" fill="#2a1505" stroke="#e8871e" stroke-width=".7"/><path d="M3.500 5.200l.5-3h1.400l.5 3z" fill="#e8871e"/><rect x="4.200" y="5.300" width="1" height="1.200" fill="#f4e8d8"/></svg>
<div class="t" style="left:20px;top:213px;height:10px;line-height:10px;font-size:6.3px;color:#c6c6c6;transform:translate(0.8px,0.74px) scaleY(1.12) rotate(.03deg);letter-spacing:-0.1px;">BedroomBG.ai</div>
<div style="left:70.3px;top:216.14px;width:5.2px;height:5.2px;background:#a9b0d6;"></div>
<div class="t" style="left:82px;top:213px;height:10px;line-height:10px;font-size:6.3px;color:#c6c6c6;transform:translate(0.3px,0.74px) scaleY(1.12) rotate(.03deg);letter-spacing:-0.1px;">Vector Art</div>
<div class="t" style="left:125px;top:213px;height:10px;line-height:10px;font-size:6.3px;color:#c6c6c6;transform:translate(0.8px,0.74px) scaleY(1.12) rotate(.03deg);letter-spacing:-0.1px;">2.7 MB</div>
<div style="left:0px;top:234.47px;width:170.4px;height:0.6px;background:#1c1c1c;"></div>
<svg style="left:10.2px;top:225.57px;" width="9" height="7.6" viewBox="0 0 9 7.6"><rect x=".3" y=".4" width="8.400" height="6.800" rx=".6" fill="#cfcfcf"/><rect x="1.700" y="1.300" width="5.600" height="5" fill="#474747"/><path d="M.9 1.300v5M8.100 1.300v5" stroke="#6a6a6a" stroke-width=".5" stroke-dasharray=".8 .7"/><circle cx="3.300" cy="2.900" r="1.150" fill="#3f8ff0"/><circle cx="5.600" cy="3.600" r="1.150" fill="#e8433a"/><circle cx="4.200" cy="4.900" r="1.150" fill="#48b848"/></svg>
<div class="t" style="left:20px;top:224px;height:10px;line-height:10px;font-size:6.3px;color:#c6c6c6;transform:translate(0.8px,0.37px) scaleY(1.12) rotate(.03deg);letter-spacing:-0.1px;">Car_Scene</div>
<div style="left:70.3px;top:226.77px;width:5.2px;height:5.2px;background:#b59f7b;"></div>
<div class="t" style="left:82px;top:224px;height:10px;line-height:10px;font-size:6.3px;color:#c6c6c6;transform:translate(0.3px,0.37px) scaleY(1.12) rotate(.03deg);letter-spacing:-0.1px;">Composition</div>
<div class="t" style="left:152px;top:224px;height:10px;line-height:10px;font-size:6.3px;color:#c6c6c6;transform:translate(0.6px,0.37px) scaleY(1.12) rotate(.03deg);letter-spacing:-0.1px;">25</div>
<div style="left:0px;top:245.1px;width:170.4px;height:0.6px;background:#1c1c1c;"></div>
<svg style="left:10.2px;top:236.2px;" width="9" height="7.6" viewBox="0 0 9 7.6"><rect x=".3" y=".4" width="8.400" height="6.800" rx=".6" fill="#cfcfcf"/><rect x="1.700" y="1.300" width="5.600" height="5" fill="#474747"/><path d="M.9 1.300v5M8.100 1.300v5" stroke="#6a6a6a" stroke-width=".5" stroke-dasharray=".8 .7"/><circle cx="3.300" cy="2.900" r="1.150" fill="#3f8ff0"/><circle cx="5.600" cy="3.600" r="1.150" fill="#e8433a"/><circle cx="4.200" cy="4.900" r="1.150" fill="#48b848"/></svg>
<div class="t" style="left:20px;top:235px;height:10px;line-height:10px;font-size:6.3px;color:#c6c6c6;transform:translate(0.8px,0px) scaleY(1.12) rotate(.03deg);letter-spacing:-0.1px;">Carscene</div>
<div style="left:70.3px;top:237.4px;width:5.2px;height:5.2px;background:#b59f7b;"></div>
<div class="t" style="left:82px;top:235px;height:10px;line-height:10px;font-size:6.3px;color:#c6c6c6;transform:translate(0.3px,0px) scaleY(1.12) rotate(.03deg);letter-spacing:-0.1px;">Composition</div>
<div class="t" style="left:152px;top:235px;height:10px;line-height:10px;font-size:6.3px;color:#c6c6c6;transform:translate(0.6px,0px) scaleY(1.12) rotate(.03deg);letter-spacing:-0.1px;">25</div>
<div style="left:0px;top:255.73px;width:170.4px;height:0.6px;background:#1c1c1c;"></div>
<svg style="left:10.2px;top:246.83px;" width="9" height="7.6" viewBox="0 0 9 7.6"><path d="M.4 1.200h3l.8 1h4.200v4.600h-8z" fill="#bdbdbd"/></svg>
<div class="t" style="left:20px;top:245px;height:10px;line-height:10px;font-size:6.3px;color:#c6c6c6;transform:translate(0.8px,0.63px) scaleY(1.12) rotate(.03deg);letter-spacing:-0.1px;">Carscene Layers</div>
<div style="left:70.3px;top:248.03px;width:5.2px;height:5.2px;background:#e8d83a;"></div>
<div class="t" style="left:82px;top:245px;height:10px;line-height:10px;font-size:6.3px;color:#c6c6c6;transform:translate(0.3px,0.63px) scaleY(1.12) rotate(.03deg);letter-spacing:-0.1px;">Folder</div>
<svg style="left:1.5px;top:247.63px;" width="5" height="6" viewBox="0 0 5 6"><path d="M1.300 .8l2.200 2.200l-2.200 2.200" fill="none" stroke="#a0a0a0" stroke-width=".8"/></svg>
<div style="left:0px;top:266.36px;width:170.4px;height:0.6px;background:#1c1c1c;"></div>
<svg style="left:10.2px;top:257.46px;" width="9" height="7.6" viewBox="0 0 9 7.6"><path d="M2 .3h3.600l1.800 1.800v5.200h-5.400z" fill="#f2f2f2" stroke="#9a9a9a" stroke-width=".4"/><path d="M4 3.200l1.800.4v2.200" fill="none" stroke="#3a7ad8" stroke-width=".6"/><circle cx="3.800" cy="5.600" r=".8" fill="#3a7ad8"/></svg>
<div class="t" style="left:20px;top:256px;height:10px;line-height:10px;font-size:6.3px;color:#c6c6c6;transform:translate(0.8px,0.26px) scaleY(1.12) rotate(.03deg);letter-spacing:-0.1px;">choices.m4a</div>
<div style="left:70.3px;top:258.66px;width:5.2px;height:5.2px;background:#a9d0b3;"></div>
<div class="t" style="left:82px;top:256px;height:10px;line-height:10px;font-size:6.3px;color:#c6c6c6;transform:translate(0.3px,0.26px) scaleY(1.12) rotate(.03deg);letter-spacing:-0.1px;">QuickTime</div>
<div class="t" style="left:125px;top:256px;height:10px;line-height:10px;font-size:6.3px;color:#c6c6c6;transform:translate(0.8px,0.26px) scaleY(1.12) rotate(.03deg);letter-spacing:-0.1px;">300 KB</div>
<div style="left:0px;top:276.99px;width:170.4px;height:0.6px;background:#1c1c1c;"></div>
<svg style="left:10.2px;top:268.09px;" width="9" height="7.6" viewBox="0 0 9 7.6"><rect x=".3" y=".4" width="8.400" height="6.800" rx=".6" fill="#cfcfcf"/><rect x="1.700" y="1.300" width="5.600" height="5" fill="#474747"/><path d="M.9 1.300v5M8.100 1.300v5" stroke="#6a6a6a" stroke-width=".5" stroke-dasharray=".8 .7"/><circle cx="3.300" cy="2.900" r="1.150" fill="#3f8ff0"/><circle cx="5.600" cy="3.600" r="1.150" fill="#e8433a"/><circle cx="4.200" cy="4.900" r="1.150" fill="#48b848"/></svg>
<div class="t" style="left:20px;top:266px;height:10px;line-height:10px;font-size:6.3px;color:#c6c6c6;transform:translate(0.8px,0.89px) scaleY(1.12) rotate(.03deg);letter-spacing:-0.1px;">Comp 1</div>
<div style="left:70.3px;top:269.29px;width:5.2px;height:5.2px;background:#b59f7b;"></div>
<div class="t" style="left:82px;top:266px;height:10px;line-height:10px;font-size:6.3px;color:#c6c6c6;transform:translate(0.3px,0.89px) scaleY(1.12) rotate(.03deg);letter-spacing:-0.1px;">Composition</div>
<div class="t" style="left:152px;top:266px;height:10px;line-height:10px;font-size:6.3px;color:#c6c6c6;transform:translate(0.6px,0.89px) scaleY(1.12) rotate(.03deg);letter-spacing:-0.1px;">25</div>
<div style="left:0px;top:287.62px;width:170.4px;height:0.6px;background:#1c1c1c;"></div>
<svg style="left:10.2px;top:278.72px;" width="9" height="7.6" viewBox="0 0 9 7.6"><rect x=".6" y=".3" width="7.600" height="7" fill="#222"/><rect x="1.200" y=".8" width="1.500" height="6" fill="#e8d83a"/><rect x="2.700" y=".8" width="1.500" height="6" fill="#3ac0e8"/><rect x="4.200" y=".8" width="1.500" height="6" fill="#5bc246"/><rect x="5.700" y=".8" width="1.700" height="6" fill="#d83ac0"/></svg>
<div class="t" style="left:20px;top:277px;height:10px;line-height:10px;font-size:6.3px;color:#c6c6c6;transform:translate(0.8px,0.52px) scaleY(1.12) rotate(.03deg);letter-spacing:-0.1px;font-style:italic;">Cup.ai</div>
<div style="left:70.3px;top:279.92px;width:5.2px;height:5.2px;background:#a9b0d6;"></div>
<div class="t" style="left:82px;top:277px;height:10px;line-height:10px;font-size:6.3px;color:#c6c6c6;transform:translate(0.3px,0.52px) scaleY(1.12) rotate(.03deg);letter-spacing:-0.1px;">Vector Art</div>
<div style="left:170.4px;top:128.3px;width:9.1px;height:161.5px;background:#1d1d1d;"></div>
<div style="left:171.8px;top:138px;width:6.6px;height:43px;background:#303030;border-radius:3.300px;"></div>
<svg style="left:170.8px;top:129.8px;" width="9" height="8" viewBox="0 0 9 8"><rect x="3" y=".5" width="2.600" height="2.200" fill="#c0c0c0"/><rect x=".3" y="4.600" width="2.600" height="2.200" fill="#c0c0c0"/><rect x="5.700" y="4.600" width="2.600" height="2.200" fill="#c0c0c0"/><path d="M4.300 2.700v1h-2.700v1M4.300 3.700h2.700v1" fill="none" stroke="#c0c0c0" stroke-width=".6"/></svg>
<div style="left:0px;top:289.3px;width:179.5px;height:11.7px;background:#262626;"></div>
<div style="left:0px;top:289px;width:179.5px;height:0.7px;background:#181818;"></div>
<svg style="left:4px;top:290.5px;" width="10" height="8" viewBox="0 0 10 8"><rect x=".5" y="1" width="6.500" height="4.500" fill="none" stroke="#b8b8b8" stroke-width=".8"/><rect x="2.500" y="3" width="6.500" height="4.500" fill="#b8b8b8"/></svg>
<svg style="left:17.5px;top:290.5px;" width="9" height="8" viewBox="0 0 9 8"><path d="M.4 1.200h3l.8 1h4.200v4.800h-8z" fill="#b8b8b8"/></svg>
<svg style="left:31px;top:290.5px;" width="10" height="8" viewBox="0 0 10 8"><rect x=".3" y=".4" width="8.400" height="6.800" rx=".6" fill="#cfcfcf"/><rect x="1.700" y="1.300" width="5.600" height="5" fill="#474747"/><path d="M.9 1.300v5M8.100 1.300v5" stroke="#6a6a6a" stroke-width=".5" stroke-dasharray=".8 .7"/><circle cx="3.300" cy="2.900" r="1.150" fill="#3f8ff0"/><circle cx="5.600" cy="3.600" r="1.150" fill="#e8433a"/><circle cx="4.200" cy="4.900" r="1.150" fill="#48b848"/></svg>
<svg style="left:45.5px;top:290.5px;" width="9" height="8" viewBox="0 0 9 8"><path d="M7.800 .4c-2.500 0-4.200 1.200-5.400 3.400l-1.600.4l1.400 1l-.8 1.400l1.400-.6l1 1.400l.4-1.600c2.200-1.200 3.600-2.900 3.600-5.400z" fill="#b8b8b8"/></svg>
<div style="left:58px;top:290.8px;width:24px;height:7.6px;background:#1d1d1d;border-radius:1px;"></div>
<div class="t" style="left:63px;top:289px;height:10px;line-height:10px;font-size:5.8px;color:#c0c0c0;transform:translate(0.8px,0.7px) scaleY(1.12) rotate(.03deg);letter-spacing:-0.1px;">8 bpc</div>
<svg style="left:86px;top:290.3px;" width="8" height="9" viewBox="0 0 8 9"><path d="M1 2h5.600M2.800 2v-1h2v1" stroke="#b8b8b8" stroke-width=".8" fill="none"/><path d="M1.500 2.800h4.600l-.5 5h-3.600z" fill="#b8b8b8"/></svg>
<div style="left:97.8px;top:290.5px;width:23px;height:8.6px;background:#303030;border-radius:4.300px;"></div>
<div style="left:182.2px;top:53.3px;width:500.3px;height:1px;background:#151515;"></div>
<div style="left:182.2px;top:54.3px;width:500.3px;height:231.3px;background:#242424;"></div>
<div style="left:182.2px;top:285.6px;width:500.3px;height:1px;background:#151515;"></div>
<svg style="left:230.5px;top:56.5px;" width="404.5" height="227.5" viewBox="230.500 56.500 404.500 227.500"><rect x="230.5" y="56.5" width="404.5" height="227.5" fill="#d3e6fd"/>
<!-- left door -->
<rect x="230.5" y="56.5" width="74" height="227.5" fill="#7aa8db"/>
<rect x="304.500" y="56.5" width="14.500" height="227.5" fill="#bfdffc"/>
<rect x="303.7" y="56.5" width="1.100" height="227.5" fill="#161c26"/>
<rect x="318.500" y="56.5" width="1.200" height="227.5" fill="#3a4452"/>
<!-- right door -->
<rect x="560.500" y="56.5" width="74.500" height="227.5" fill="#7aa8db"/>
<rect x="546" y="56.5" width="14.500" height="227.5" fill="#bfdffc"/>
<rect x="545.300" y="56.5" width="1.200" height="227.5" fill="#3a4452"/>
<rect x="560" y="56.5" width="1.100" height="227.5" fill="#161c26"/>
<!-- graffiti left door -->
<g fill="none" stroke="#3a72c0" stroke-width="0.700" stroke-linecap="round" stroke-linejoin="round">
<circle cx="251.600" cy="109.300" r="1.600"/><circle cx="255.400" cy="112" r="1.200"/>
<path d="M248.500 142c-1.300-.3-2 .8-1.300 1.800c.6.800 1.600 1.200 1.500 2.300c-.1 1.200-1.800 1.600-2.500.6c-.6-1 .3-1.900 1.400-2.300c1-.4 1.800-1 2.400-1.800M252.300 141.300c1.600-.3 2.300.9 1.300 1.900c-.5.500-1.200.700-1.700.900c1.500 0 2.600.8 2.300 2.200c-.3 1.300-1.700 1.800-2.700 1.500" stroke="#2c62b2" stroke-width="0.900"/>
<g transform="rotate(-11 261 192)"><path d="M252 183.500h18c2 0 3.500 1.500 3.500 3.500v9c0 2-1.500 3.500-3.500 3.500h-11.500l-4.500 5.500l.5-5.500h-2.500c-2 0-3.500-1.500-3.500-3.500v-9c0-2 1.500-3.500 3.500-3.500z"/><path d="M268 190c.3-1.200 1.800-1 1.700.2c.9-.8 2 .2 1.200 1.200l-2.400 2.200z" stroke-width="0.500"/></g>
<path d="M279.500 209.500c2.200-.3 3.800-1.800 3.600-3.600c-.2-1.300-1.800-1.500-2.300-.2c-.6 1.600.3 3.700 2.200 3.800c2.400.1 4-2 4.300-4c.2-1.500-1.300-2.200-2.100-.9c-.9 1.600.2 3.600 2 3.500c1.800-.1 3-1.500 3.800-3.300" stroke="#2c62b2" stroke-width="0.800"/>
<path d="M258.500 243.500l-4.500-3.300v2.200c-3-.3-5.500-.8-8.300-2.200c1.500 2.600 3.500 4.500 6 5.400c.8.300 1.500.400 2.300.400v2.400z"/>
</g>
<text x="254" y="195.800" font-family="Liberation Sans, sans-serif" font-size="7.500" font-style="italic" fill="#3a72c0" transform="rotate(-11 261 192)">Hi</text>
<!-- graffiti right door -->
<g fill="none" stroke="#3f78c4" stroke-width="0.7" stroke-linecap="round" stroke-linejoin="round">
<path d="M582 86.500l1 2.300l2.500.2l-1.900 1.600l.7 2.500l-2.300-1.400l-2.200 1.400l.6-2.500l-1.900-1.600l2.500-.2z"/>
<path d="M612 104c1-2 1-5 1.500-6c.5 2 .3 4 1 5.500c.8-2 .8-4 1.300-5c.5 2 .4 3.500 1.200 5c.6-1.500.7-3 1.200-4c.5 1.500 1 3 3.500 3.500"/>
<circle cx="622.500" cy="117" r="1.300"/><path d="M622.500 113.500c1.500 0 2 1.500 1 2.300c1.500-.5 2.800.8 2 2c-.8 1-2 .8-2.300 0c.5 1.500-.5 2.700-1.700 2.300c-1.200-.4-1.300-1.800-.5-2.500c-1.300.6-2.600-.3-2.300-1.600c.3-1.200 1.700-1.400 2.500-.7c-.6-1 .1-1.800 1.300-1.800z"/>
<path d="M581 133l5 18M587.500 131l5 17M575 140.500l21-5.500M577 147.500l21-5.500"/>
<circle cx="583.500" cy="146.500" r="1.400"/><circle cx="590.500" cy="145.500" r="1.400"/><circle cx="595" cy="138" r="1.300"/>
<path d="M577 136l2 2.500M579 136l-2 2.500M584 150.500l2 2.500M586 150.500l-2 2.500M578 143.500l2 2M580 143.500l-2 2"/>
<path d="M620 205c1.500-2 3-2.500 4.500-3M622 202v4M627 201.500c1.200-.8 2.300.2 1.800 1.300c-.5 1-2 .8-2-.3"/>
<path d="M617 218.500l4.500 11.500l-12-5.500zM611 220.500l11.500 2l-8 7.500z" stroke="#2c62b2" stroke-width="0.900"/>
<path d="M595 243c0-1.200 1.500-1.500 2-.5c.8 1.500-1 3.500-3 3c-2.500-.6-3-4-1-5.500c2.500-2 6.500-.5 6.500 3c0 3.500-3.500 5.500-6.500 4.800c-2.500-.6-4-3-3.800-5.500"/>
<path d="M617.500 262l-2 11M621.500 261.500l-2 11M613.500 266l10-1.500M613 270l10-1.500"/>
</g>
<path d="M584.300 201c3.500-2.500 4.500-7.500.5-10.500" fill="none" stroke="#1f5fb3" stroke-width="2.400" stroke-linecap="round"/><path d="M580 190.300l6-4.600l.6 7.200z" fill="#1f5fb3"/>
<!-- wall graffiti -->
<g fill="none" stroke="#3f78c4" stroke-width="0.7" stroke-linecap="round" stroke-linejoin="round">
<path d="M521.500 188c-3-2-5-4-3.800-6c1-1.500 3-1 3.600.8c.8-2 3.400-2.400 4 0c.5 2-1.600 3.800-3.800 5.200z"/>
<path d="M533 184l3 3.500M536 184l-3 3.500M538.500 184.500c1.300-.5 2.300.5 1.800 1.700c-.5 1-2 .8-2.200-.4c-.1-.6.100-1 .4-1.300z"/>
<path d="M514 199.500c1.500 1.500 4 1 5-1c1-2-1.500-3-2-1c-.5 2.500 3 3 5.500 1.500c3-2 4.500-6 9-5.500c4 .5 4.500 5.500 3 8.500c-.8 1.800-2 3-3.500 3.500"/>
</g>
<!-- toilet tank -->
<path d="M379.300 172v22c0 6 3 9.500 9 9.500h22v-11.300h-17c-2 0-3-1-3-3v-17z" fill="#fff" stroke="#7d8590" stroke-width="0.700"/>
<path d="M337 176.500l8 .8h80v-3z" fill="#b9cbe4"/>
<path d="M335.500 112l8.500 62.500h81v-62.500z" fill="#fdfdfd"/>
<path d="M335.500 112l8.500 62.500l8.500 0l-6.500-62.500z" fill="#ececee"/>
<path d="M335.500 112l8.500 62.500h81" fill="none" stroke="#6c7178" stroke-width="0.800"/>
<rect x="327.300" y="101.200" width="157" height="11.800" fill="#c6c6c6" stroke="#8e8e8e" stroke-width="0.600"/>
<path d="M361.500 121.800c0-1.200.8-1.800 2-1.800h28c1.500 0 2 1 2 2v7c-2 2.500-5 2.500-7.500 1c-3-2-6-3-9-2.500c-3 .5-5 1-8 1c-4 0-7.500 0-7.500-3z" fill="#787878"/>
<!-- toilet rolls on tank -->
<path d="M344.500 101.200v-17c0-2 1.500-3.500 4-3.500h13.500c2.500 0 4.200 1.500 4.200 3.500v17z" fill="#f6f6f8" stroke="#858993" stroke-width="0.700"/>
<path d="M357.500 80.700c.5 4 1.500 6 .5 9c-1 3 0 7 .5 11.500h7.700v-17c0-2-1.700-3.500-4.200-3.500z" fill="#eceef8"/>
<path d="M357.500 80.700c.5 4 1.500 6 .5 9c-1 3 0 7 .5 11.500" fill="none" stroke="#6e727c" stroke-width="0.700"/>
<path d="M368.500 101.200v-17c0-2 1.500-3.500 4-3.500h14.500c2.500 0 4.300 1.500 4.300 3.500v17z" fill="#f6f6f8" stroke="#858993" stroke-width="0.700"/>
<path d="M379.500 80.700v20.500" stroke="#dfe1e8" stroke-width="0.600"/>
<!-- wall roll holder -->
<path d="M357.500 215c1 7.500 0 14-4.500 20" fill="none" stroke="#717a88" stroke-width="0.700"/>
<circle cx="342.500" cy="215.600" r="15.200" fill="#fdfdfd" stroke="#7a808b" stroke-width="0.800"/>
<circle cx="343.700" cy="215.200" r="6.600" fill="#fff" stroke="#7a808b" stroke-width="0.800"/>
<rect x="325" y="214.300" width="18.500" height="4.200" fill="#8a8a8a"/>
<rect x="319.400" y="211" width="6.300" height="12" fill="#5a5a5a"/>
<!-- blue cup -->
<path d="M506.500 271h36v13h-36z" fill="#4285e6"/>
<ellipse cx="524.500" cy="271" rx="18" ry="2.600" fill="#8b8f96"/>
<path d="M506.500 272c5 2.200 31 2.200 36 0v3c-5 2-31 2-36 0z" fill="#3a74d0"/>
<!-- halo behind body -->
<path d="M428 187c-8 1-14 3-18 6c-11 7-20 18-24.800 34c-1.500 5-2.500 10-3 15l-5.500 42h130l-11.500-45.500c-1.500-10-5-20-10.500-28.500c-6-9-16-17-26-21z" fill="#fcfcfd" stroke="#c3c9d3" stroke-width="0.600"/>
<!-- arms -->
<path d="M387.800 243l17.300 11.400l-2.100 29.600h-21z" fill="#cf8e68" stroke="#1a1a1a" stroke-width="0.700" stroke-linejoin="round"/>
<path d="M476.500 250.200l17.500-8.200l11.700 42h-15.200z" fill="#cf8e68" stroke="#1a1a1a" stroke-width="0.700" stroke-linejoin="round"/>
<!-- shirt body -->
<path d="M429.700 192c-10 2.500-19 6-26.900 11.400c-6 6-9.500 14-11.800 23.400c-1.400 5-2.400 10-3.400 15.200l17.500 12.400l3.500-18.200c1 8.500 3.500 17 4.700 25.700c.8 7 1.200 14 1.200 22.100h55c-.5-9-3-18-3.500-26.800c-.3-7 .3-14 1.100-21l9.400 14l17.500-8.200c-1.200-6-3.500-12-7-17.500c-3-7-7-13.500-11.700-18.800c-5.500-6-12-10.500-19.900-13.700z" fill="#fff" stroke="#1a1a1a" stroke-width="0.800" stroke-linejoin="round"/>
<!-- placket + button -->
<path d="M441.500 274.500l2.200 9.500" stroke="#555" stroke-width="0.500" fill="none"/>
<circle cx="438" cy="276" r="1.300" fill="#fff" stroke="#444" stroke-width="0.500"/>
<!-- pocket -->
<path d="M413.300 234.300l18.700-.9v7.600c0 5.500-3.500 8.800-9.300 8.800c-5.700 0-9.400-3.300-9.400-8.800z" fill="#fdfdfd" stroke="#1a1a1a" stroke-width="0.600"/>
<!-- neck -->
<path d="M431.500 180v14l9.700 10.500l9.300-11v-14z" fill="#cb8a64"/>
<path d="M431.500 183v5c6 4 14 4 19 0v-5z" fill="#b57853"/>
<!-- tie -->
<path d="M437.900 215.100l-3.500 45.600l7 14.100l8.200-17.600l-5.200-42.100z" fill="#0f1f2e" stroke="#070c12" stroke-width="0.500" stroke-linejoin="round"/>
<path d="M435.500 206.900l4.700-2.800l4.700 1.600l-.5 9.400h-6.500z" fill="#0f1f2e" stroke="#070c12" stroke-width="0.500" stroke-linejoin="round"/>
<g stroke="#e3c62f" stroke-width="0.900" fill="none" stroke-linecap="round">
<path d="M437.600 222l7.600 4.500M437 229.300l9 5.300M436.400 236.600l10.400 6.200M435.800 244l11.800 7M435.300 251.500l12.800 7.500M436.300 262.500l8.200 4.800"/>
</g>
<!-- collar -->
<path d="M433.200 190.500c-3 1.500-5 4-6.500 7.500l.6 20.600l10.600-12.900c-2.500-4-4.500-9-5.300-15.200z" fill="#fff" stroke="#1a1a1a" stroke-width="0.700" stroke-linejoin="round"/>
<path d="M449.500 189.500c2.500 2 4.500 4.500 5.900 8c1.500 3.500 2.400 7 2.400 10.500l-7.100 11.800l-5.800-12.800c2.500-5 4-11 4.600-17.500z" fill="#fff" stroke="#1a1a1a" stroke-width="0.700" stroke-linejoin="round"/>
<!-- hair back (sides, behind ears/face) -->
<path d="M393 139L406 139L426 176L420 185C414 184.500 409 182 406 178C397 168 393 154 393 139zM484.500 139L474 139L457 174L463 182C468 180 472 177 475 172C479 166 481.500 160 482.500 155z" fill="#3c1e13" stroke="#1a0d08" stroke-width="0.400"/>
<!-- ponytail -->
<path d="M420.300 183c-4 6-7 14-8.200 22.700c-.8 6-.3 12 1.200 17.600c1.500-1.200 2.300-3 2.600-4.800c.8 2.500 2 4 3.800 5c0-2.200.4-4 1.300-5.600c.8 1.200 2.200 1.700 4 .7c3-5.500 4.700-11.500 4.700-17.600c0-6-1.500-11-4.400-15z" fill="#3c1e13" stroke="#1a0d08" stroke-width="0.500" stroke-linejoin="round"/>
<!-- ears -->
<ellipse cx="396.900" cy="150" rx="5.800" ry="8.400" fill="#d39470" stroke="#1a1a1a" stroke-width="0.700"/>
<ellipse cx="479.800" cy="150" rx="5.500" ry="8.400" fill="#d39470" stroke="#1a1a1a" stroke-width="0.700"/>
<path d="M394.500 147c1.800-1.800 4-1 4 1c0 1.800-1.700 2.200-2.200 4" fill="none" stroke="#1a1a1a" stroke-width="0.700"/>
<path d="M482.500 147c-1.800-1.800-4-1-4 1c0 1.800 1.700 2.200 2.200 4" fill="none" stroke="#1a1a1a" stroke-width="0.700"/>
<circle cx="397" cy="157" r="1" fill="#111"/><circle cx="479.500" cy="156.500" r="1" fill="#111"/>
<!-- face -->
<path d="M403 120c-1 12-.5 28 2 42c2 5 5 8 8 10c4 4 8 7 12 9c5 3 11 4.500 16.600 4.500c5.500 0 11-1.500 16.400-4.500c4-2 7-5 10-9c2.500-3 4-6 5-10c2.500-14 3-30 2-42c-10-14-24-20-36-20c-13 0-26 6-36 20z" fill="#d09069" stroke="#1a1a1a" stroke-width="0.700"/>
<!-- hair top -->
<path d="M400.3 89.9C400.3 89.9 401.4 90.9 404.0 91.8C406.6 92.7 404.7 92.9 408.0 92.6C411.3 92.3 408.3 92.4 414.0 91.0C419.7 89.6 417.1 89.7 425.0 88.3C432.9 86.9 428.6 87.1 437.6 86.9C446.6 86.7 443.2 86.3 452.0 87.8C460.8 89.3 456.7 88.1 464.0 91.5C471.3 94.9 468.3 93.2 474.0 98.0C479.7 102.8 477.2 100.7 481.0 106.0C484.8 111.3 482.8 108.7 485.5 114.0C488.2 119.3 486.1 117.3 489.0 122.0C491.9 126.7 494.2 128.2 494.2 128.2C494.2 128.2 492.5 129.1 490.0 128.8C487.5 128.5 486.8 127.2 486.8 127.2C486.8 127.2 487.7 129.2 487.8 134.0C487.9 138.8 487.0 141.5 487.0 141.5C487.0 141.5 476.0 141.5 476.0 141.5C476.0 141.5 476.9 139.5 474.0 135.5C471.1 131.5 471.7 132.9 467.4 129.6C463.1 126.3 465.0 128.1 461.0 125.5C457.0 122.9 458.7 125.2 455.5 121.7C452.3 118.2 453.5 119.3 451.5 115.0C449.5 110.7 449.5 108.7 449.5 108.7C449.5 108.7 450.0 111.0 446.0 116.0C442.0 121.0 443.6 119.1 437.6 123.6C431.6 128.1 434.0 126.2 428.0 129.5C422.0 132.8 425.0 131.3 419.7 133.6C414.4 135.9 416.6 134.9 412.0 136.5C407.4 138.1 405.8 138.5 405.8 138.5C405.8 138.5 407.0 141.0 407.0 141.0C407.0 141.0 404.8 144.5 404.8 144.5C404.8 144.5 403.5 141.5 403.5 141.5C403.5 141.5 400.3 141.7 397.0 141.5C393.7 141.3 393.5 141.0 393.5 141.0C393.5 141.0 392.7 138.1 392.5 133.0C392.3 127.9 392.2 132.6 392.9 125.6C393.6 118.6 392.8 119.9 394.5 112.0C396.2 104.1 395.2 107.5 398.0 102.0C400.8 96.5 403.0 95.5 403.0 95.5C403.0 95.5 400.3 89.9 400.3 89.9z" fill="#3c1e13" stroke="#1a0d08" stroke-width="0.500" stroke-linejoin="round"/>
<path d="M453.500 88.300c-.5-2.500-1.500-4-3.500-5M454.800 88.300c1-3 3-4.500 6-4.500" fill="none" stroke="#2a140c" stroke-width="0.700" stroke-linecap="round"/>
<!-- eyebrows -->
<path d="M412 137.500c1.500-.5 3-1.500 4-2.500M452.500 124.300c3-.8 6-.5 8.500 1" fill="none" stroke="#2a140c" stroke-width="1.200" stroke-linecap="round"/>
<!-- eyes -->
<ellipse cx="427.300" cy="140" rx="7.300" ry="8.400" fill="#fff" stroke="#1a1a1a" stroke-width="0.800"/>
<ellipse cx="457.100" cy="140.800" rx="7" ry="8.800" fill="#fff" stroke="#1a1a1a" stroke-width="0.800"/>
<path d="M420.300 138c1.500-7.500 12.500-7.500 14 0M450.300 138.500c1.500-8 12-8 13.600 0" fill="none" stroke="#1a1a1a" stroke-width="1.100"/>
<ellipse cx="427.300" cy="142.800" rx="3.700" ry="5.100" fill="#050505"/>
<ellipse cx="456.600" cy="144" rx="3.700" ry="5.300" fill="#050505"/>
<!-- nose -->
<path d="M437.500 155.500c-.5-3 1.500-5 4.500-5c3 0 5 2 4 5.500" fill="none" stroke="#1a1a1a" stroke-width="0.800" stroke-linecap="round"/>
<!-- mouth -->
<path d="M433.600 170.500c0-4.500 3.300-7.200 8.200-7.200c4.900 0 8 2.700 8 7.200c0 4.300-3.200 6.900-7.800 6.900c-4.900 0-8.400-2.600-8.400-6.900z" fill="#170909" stroke="#0c0c0c" stroke-width="0.700"/>
<path d="M436.300 165.800c3-1.600 8-1.600 11.200 0c-1 1.100-3 1.700-5.500 1.700c-2.700 0-4.700-.6-5.700-1.700z" fill="#fff"/>
<ellipse cx="441.700" cy="173.600" rx="4" ry="2.500" fill="#e8475c"/>
<path d="M438.500 181c2 .9 4.500 .9 6.500 0" fill="none" stroke="#8a5236" stroke-width="0.700" stroke-linecap="round"/>
<!-- freckles -->
<circle cx="443" cy="128.500" r="0.900" fill="#b97a55"/><circle cx="446.500" cy="129.500" r="0.900" fill="#b97a55"/><circle cx="413" cy="157.500" r="0.800" fill="#b97a55"/>
</svg>
<svg style="left:186.5px;top:29px;" width="6" height="6" viewBox="0 0 6 6"><path d="M1.700 1.900l2.600 2.600M4.300 1.900l-2.600 2.600" stroke="#8a8a8a" stroke-width=".7"/></svg>
<div style="left:196.8px;top:29px;width:6px;height:6px;background:#b59f7b;"></div>
<svg style="left:207.5px;top:27.5px;" width="7" height="8" viewBox="0 0 7 8"><rect x="1.600" y="3.800" width="4.400" height="3.200" rx=".5" fill="#c0c0c0"/><path d="M2.400 3.800v-1.200a1.200 1.200 0 0 1 2.400 0" fill="none" stroke="#c0c0c0" stroke-width=".7"/><rect x="3.300" y="4.800" width="1" height="1.200" fill="#262626"/></svg>
<div class="t" style="left:218px;top:27px;height:10px;line-height:10px;font-size:6.4px;color:#b4b4b4;transform:translate(0px,0px) scaleY(1.12) rotate(.03deg);letter-spacing:-0.1px;">Composition</div>
<div class="t" style="left:254px;top:27px;height:10px;line-height:10px;font-size:6.4px;color:#4a9ff2;transform:translate(0.5px,0px) scaleY(1.12) rotate(.03deg);letter-spacing:-0.05px;">Full_Video</div>
<div style="left:288.5px;top:29.5px;width:5.2px;height:1px;background:#909090;"></div>
<div style="left:288.5px;top:31.5px;width:5.2px;height:1px;background:#909090;"></div>
<div style="left:288.5px;top:33.5px;width:5.2px;height:1px;background:#909090;"></div>
<div style="left:194.2px;top:42px;width:46.3px;height:7.9px;background:#171717;border-radius:1px;"></div>
<div class="t" style="left:198px;top:41px;height:10px;line-height:10px;font-size:6.2px;color:#4a9ff2;transform:translate(0.5px,0.2px) scaleY(1.12) rotate(.03deg);letter-spacing:-0.05px;">Full_Video</div>
<svg style="left:233.5px;top:43px;" width="6" height="6" viewBox="0 0 6 6"><path d="M3.800 .8l-2.200 2.200l2.200 2.200" fill="none" stroke="#4a9ff2" stroke-width=".8"/></svg>
<div class="t" style="left:246px;top:41px;height:10px;line-height:10px;font-size:6.2px;color:#a8a8a8;transform:translate(0.5px,0.2px) scaleY(1.12) rotate(.03deg);letter-spacing:-0.05px;">Aki</div>
<div style="left:182.2px;top:286.6px;width:500.3px;height:13.4px;background:#262626;"></div>
<svg style="left:182.5px;top:286.7px;" width="499.5" height="13.3" viewBox="182.500 286.700 499.500 13.300"><g transform="translate(189.1 293.2)"><rect x="-3.600" y="-3" width="5" height="4" fill="#6a6a6a"/><rect x="-1.600" y="-1.200" width="5.200" height="4.200" fill="#bcbcbc"/></g><g transform="translate(201.4 293.2)"><rect x="-3.600" y="-3.200" width="7.200" height="5" fill="none" stroke="#bcbcbc" stroke-width=".8"/><path d="M-2 3.300h4M0 1.800v1.500" stroke="#bcbcbc" stroke-width=".8"/></g><g transform="translate(213.3 293.2)"><path d="M-4.200-2.600h8.400v2.600a1.800 1.800 0 0 1-3.600 0h-1.200a1.800 1.800 0 0 1-3.600 0z" fill="#bcbcbc"/><circle cx="-2.300" cy="-.6" r="1" fill="#262626"/><circle cx="2.300" cy="-.6" r="1" fill="#262626"/><path d="M.4 3.600h2.400l-1.200 1.200z" fill="#bcbcbc"/></g><g transform="translate(265.4 293.2)"><rect x="-3.800" y="-3.400" width="7.600" height="5.400" fill="none" stroke="#bcbcbc" stroke-width=".8"/><path d="M0-3.400v5.400M-3.800-.7h7.600" stroke="#bcbcbc" stroke-width=".5"/><path d="M1 3.400h2.600l-1.300 1.300z" fill="#bcbcbc"/></g><g transform="translate(278.2 293.2)"><path d="M-3.800 3l1.200-5.600l5.800-.8l.6 6.400z" fill="none" stroke="#bcbcbc" stroke-width=".8"/></g><g transform="translate(329.2 293.2)"><path d="M-4-2h2l.8-1.200h2.400l.8 1.200h2v5.200h-8z" fill="#bcbcbc"/><circle cx="0" cy=".7" r="1.500" fill="#262626"/></g><g transform="translate(342 293.2)"><path d="M-3.400 2.400a1.700 1.700 0 0 1 0-2.400l1.400-1.400M3.400-2.400a1.700 1.700 0 0 1 0 2.400l-1.400 1.400M-1 1l2-2" fill="none" stroke="#484848" stroke-width=".9"/></g><g transform="translate(353.6 293.2)"><circle cx="-1.500" cy=".8" r="2" fill="#3a7ae8"/><circle cx="1.500" cy=".8" r="2" fill="#48c04a"/><circle cx="0" cy="-1.600" r="2" fill="#e8443a"/><path d="M1.600 3.800h2.400l-1.200 1.200z" fill="#bcbcbc"/></g><g transform="translate(416.2 293.2)"><rect x="-3.800" y="-3.400" width="7.600" height="6.800" rx=".8" fill="none" stroke="#bcbcbc" stroke-width=".8"/><rect x="-2" y="-1.600" width="4" height="3.200" fill="#bcbcbc"/></g><g transform="translate(427.9 293.2)"><rect x="-5" y="-4.800" width="10" height="9.600" rx="1" fill="#171717"/><rect x="-3.400" y="-3" width="6.800" height="6" fill="none" stroke="#4a9ff2" stroke-width=".8" stroke-dasharray="1.600 1"/><path d="M-1.600-1.400l3.200 2.800M1.600-1.400l-3.200 2.800" stroke="#4a9ff2" stroke-width=".8"/></g><g transform="translate(542.3 293.2)"><rect x="-3.400" y="-.6" width="6.800" height="3.800" fill="none" stroke="#bcbcbc" stroke-width=".8"/><path d="M-4.400-3.200h8.800" stroke="#bcbcbc" stroke-width="1"/><path d="M0-3v2.400" stroke="#bcbcbc" stroke-width=".6"/></g><g transform="translate(555.1 293.2)"><rect x="-5" y="-4.800" width="10" height="9.600" rx="1" fill="#171717"/><rect x="-3.600" y="-3.200" width="7.200" height="5.800" fill="none" stroke="#bcbcbc" stroke-width=".8"/><path d="M-1.600-.4h3.200M0-2v3.200" stroke="#bcbcbc" stroke-width=".7"/><path d="M1 3.600h2.600l-1.300 1.200z" fill="#bcbcbc"/></g><g transform="translate(568 293.2)"><rect x="-3.600" y="-1.400" width="7.200" height="4.400" fill="none" stroke="#bcbcbc" stroke-width=".8"/><path d="M0-3.800v3.600M-1.400-2.400l1.400-1.500l1.400 1.500" stroke="#bcbcbc" stroke-width=".7" fill="none"/></g><g transform="translate(579.3 293.2)"><rect x="-1.300" y="-3.600" width="2.600" height="2.200" fill="#bcbcbc"/><rect x="-4" y="1.200" width="2.800" height="2.300" fill="#bcbcbc"/><rect x="1.200" y="1.200" width="2.800" height="2.300" fill="#bcbcbc"/><path d="M0-1.400v1.200h-2.600v1.400M0-.2h2.600v1.400" fill="none" stroke="#bcbcbc" stroke-width=".6"/></g><g transform="translate(593 293.2)"><circle cx="0" cy="0" r="2.900" fill="none" stroke="#bcbcbc" stroke-width="1.600" stroke-dasharray="3.300 1.250"/><circle cx="0" cy="0" r="1.500" fill="none" stroke="#bcbcbc" stroke-width=".5"/></g></svg>
<div style="left:220.4px;top:288.2px;width:37.9px;height:10px;background:#1a1a1a;border-radius:1px;"></div>
<div class="t" style="left:223px;top:288px;height:10px;line-height:10px;font-size:6.3px;color:#c4c4c4;transform:translate(0.8px,0.3px) scaleY(1.12) rotate(.03deg);letter-spacing:-0.1px;">(75%)</div>
<svg style="left:250.9px;top:291.2px;" width="6" height="4" viewBox="0 0 6 4"><path d="M.6 .6l2.300 2.300l2.300-2.300" fill="none" stroke="#b4b4b4" stroke-width=".8"/></svg>
<div style="left:285px;top:288.2px;width:36.5px;height:10px;background:#1a1a1a;border-radius:1px;"></div>
<div class="t" style="left:288px;top:288px;height:10px;line-height:10px;font-size:6.2px;color:#b8b8b8;transform:translate(0.7px,0.3px) scaleY(1.12) rotate(.03deg);letter-spacing:-0.05px;">0:00:35:19</div>
<div style="left:360.8px;top:288.2px;width:47.5px;height:10px;background:#1a1a1a;border-radius:1px;"></div>
<div class="t" style="left:364px;top:288px;height:10px;line-height:10px;font-size:6.3px;color:#c4c4c4;transform:translate(0.2px,0.3px) scaleY(1.12) rotate(.03deg);letter-spacing:-0.1px;">(Full)</div>
<svg style="left:400.9px;top:291.2px;" width="6" height="4" viewBox="0 0 6 4"><path d="M.6 .6l2.300 2.300l2.300-2.300" fill="none" stroke="#b4b4b4" stroke-width=".8"/></svg>
<div style="left:435.6px;top:288.2px;width:58.4px;height:10px;background:#1a1a1a;border-radius:1px;"></div>
<div class="t" style="left:439px;top:288px;height:10px;line-height:10px;font-size:6.3px;color:#c4c4c4;transform:translate(0px,0.3px) scaleY(1.12) rotate(.03deg);letter-spacing:-0.1px;">Active Camera</div>
<svg style="left:486.6px;top:291.2px;" width="6" height="4" viewBox="0 0 6 4"><path d="M.6 .6l2.300 2.300l2.300-2.300" fill="none" stroke="#b4b4b4" stroke-width=".8"/></svg>
<div style="left:497.4px;top:288.2px;width:37.2px;height:10px;background:#1a1a1a;border-radius:1px;"></div>
<div class="t" style="left:500px;top:288px;height:10px;line-height:10px;font-size:6.3px;color:#c4c4c4;transform:translate(0.2px,0.3px) scaleY(1.12) rotate(.03deg);letter-spacing:-0.1px;">1 View</div>
<svg style="left:527.2px;top:291.2px;" width="6" height="4" viewBox="0 0 6 4"><path d="M.6 .6l2.300 2.300l2.300-2.300" fill="none" stroke="#b4b4b4" stroke-width=".8"/></svg>
<div class="t" style="left:600px;top:288px;height:10px;line-height:10px;font-size:6.2px;color:#4a9ff2;transform:translate(0.7px,0.3px) scaleY(1.12) rotate(.03deg);letter-spacing:-0.05px;">+0.0</div>
<div style="left:682.5px;top:24px;width:2.5px;height:278px;background:#161616;"></div>
<div style="left:685px;top:96.8px;width:122.5px;height:1.7px;background:#161616;"></div>
<div style="left:685px;top:299px;width:122.5px;height:3px;background:#161616;"></div>
<div style="left:799.8px;top:24px;width:0.7px;height:275px;background:#1a1a1a;"></div>
<div style="left:800.5px;top:24px;width:7.5px;height:275px;background:#1f1f1f;"></div>
<div style="left:801.2px;top:26.6px;width:5.8px;height:61px;background:#3c3c3c;border-radius:2.900px;"></div>
<div class="t" style="left:691px;top:26px;height:10px;line-height:10px;font-size:6.6px;color:#c0c0c0;transform:translate(0.7px,0.7px) scaleY(1.12) rotate(.03deg);letter-spacing:-0.1px;">Info</div>
<div style="left:789.5px;top:29.5px;width:5.2px;height:1px;background:#909090;"></div>
<div style="left:789.5px;top:31.5px;width:5.2px;height:1px;background:#909090;"></div>
<div style="left:789.5px;top:33.5px;width:5.2px;height:1px;background:#909090;"></div>
<div style="left:689.5px;top:49.4px;width:11.5px;height:11px;background:#000;"></div>
<div class="t" style="left:703px;top:41px;height:10px;line-height:10px;font-size:6.2px;color:#b4b4b4;transform:translate(0.6px,0.2px) scaleY(1.12) rotate(.03deg);letter-spacing:0px;">R :</div>
<div class="t" style="left:703px;top:48px;height:10px;line-height:10px;font-size:6.2px;color:#b4b4b4;transform:translate(0.6px,0.35px) scaleY(1.12) rotate(.03deg);letter-spacing:0px;">G :</div>
<div class="t" style="left:703px;top:55px;height:10px;line-height:10px;font-size:6.2px;color:#b4b4b4;transform:translate(0.6px,0.5px) scaleY(1.12) rotate(.03deg);letter-spacing:0px;">B :</div>
<div class="t" style="left:703px;top:62px;height:10px;line-height:10px;font-size:6.2px;color:#b4b4b4;transform:translate(0.6px,0.65px) scaleY(1.12) rotate(.03deg);letter-spacing:0px;">A :   0</div>
<div style="left:742.3px;top:43.6px;width:0.6px;height:28.5px;background:#303030;"></div>
<div class="t" style="left:754px;top:41px;height:10px;line-height:10px;font-size:6.2px;color:#b4b4b4;transform:translate(0.6px,0.2px) scaleY(1.12) rotate(.03deg);">X : 821</div>
<div class="t" style="left:754px;top:48px;height:10px;line-height:10px;font-size:6.2px;color:#b4b4b4;transform:translate(0.6px,0.4px) scaleY(1.12) rotate(.03deg);">Y : 1074</div>
<svg style="left:747.2px;top:55.2px;" width="6" height="6" viewBox="0 0 6 6"><path d="M3 .3v5.400M.3 3h5.400" stroke="#b4b4b4" stroke-width=".7"/></svg>
<div style="left:689px;top:75.4px;width:107px;height:0.6px;background:#2e2e2e;"></div>
<div class="t" style="left:691px;top:101px;height:10px;line-height:10px;font-size:6.6px;color:#c0c0c0;transform:translate(0.7px,0.5px) scaleY(1.12) rotate(.03deg);letter-spacing:-0.1px;">Preview</div>
<div style="left:789.5px;top:103.5px;width:5.2px;height:1px;background:#909090;"></div>
<div style="left:789.5px;top:105.5px;width:5.2px;height:1px;background:#909090;"></div>
<div style="left:789.5px;top:107.5px;width:5.2px;height:1px;background:#909090;"></div>
<svg style="left:705px;top:117px;" width="72" height="10" viewBox="705 117 72 10"><g transform="translate(714.400 122)"><rect x="-3.300" y="-2.600" width="1.200" height="5.200" fill="#c4c4c4"/><path d="M2.800-2.600v5.200l-4.200-2.600z" fill="#c4c4c4"/></g><g transform="translate(727.600 122)"><path d="M.6-2.600v5.200l-4-2.600z" fill="#c4c4c4"/><rect x="1.600" y="-2.600" width="1.300" height="5.200" fill="#c4c4c4"/></g><g transform="translate(741.200 122)"><path d="M-2-2.900v5.800l4.600-2.900z" fill="#c4c4c4"/></g><g transform="translate(754.800 122)"><rect x="-2.900" y="-2.600" width="1.300" height="5.200" fill="#c4c4c4"/><path d="M-.6-2.600v5.200l4-2.600z" fill="#c4c4c4"/></g><g transform="translate(768.400 122)"><path d="M-2.800-2.600v5.200l4.200-2.600z" fill="#c4c4c4"/><rect x="2.100" y="-2.600" width="1.200" height="5.200" fill="#c4c4c4"/></g></svg>
<div style="left:688.8px;top:130.4px;width:108px;height:0.6px;background:#303030;"></div>
<div style="left:782.3px;top:158.5px;width:0.6px;height:9px;background:#3a3a3a;"></div>
<div class="t" style="left:688px;top:133px;height:10px;line-height:10px;font-size:6.3px;color:#a4a4a4;transform:translate(0.8px,0.3px) scaleY(1.12) rotate(.03deg);letter-spacing:-0.1px;">Shortcut</div>
<div style="left:688.8px;top:144.2px;width:93.7px;height:9.6px;background:#1b1b1b;border-radius:1px;"></div>
<div class="t" style="left:692px;top:144px;height:10px;line-height:10px;font-size:6.3px;color:#cacaca;transform:translate(0.8px,0.2px) scaleY(1.12) rotate(.03deg);letter-spacing:-0.1px;">Option+Numpad .</div>
<svg style="left:774.7px;top:147.4px;" width="6" height="4" viewBox="0 0 6 4"><path d="M.6 .6l1.900 1.900l1.900-1.900" fill="none" stroke="#b4b4b4" stroke-width=".8"/></svg>
<svg style="left:787px;top:144.5px;" width="10" height="9" viewBox="0 0 10 9"><path d="M2.600 2.600a3 3 0 1 1-.3 3.400" fill="none" stroke="#c0c0c0" stroke-width=".9"/><path d="M.8 1l.3 3.200l3-1.300z" fill="#c0c0c0"/><path d="M1.500 8.300h6.500" stroke="#c0c0c0" stroke-width=".8"/></svg>
<div class="t" style="left:688px;top:158px;height:10px;line-height:10px;font-size:6.3px;color:#a4a4a4;transform:translate(0.8px,0px) scaleY(1.12) rotate(.03deg);letter-spacing:-0.1px;">Include:</div>
<svg style="left:742.5px;top:158.5px;" width="11" height="9" viewBox="0 0 11 9"><path d="M.6 4.500c2-3.300 7.400-3.300 9.600 0c-2.200 3.300-7.600 3.300-9.600 0z" fill="none" stroke="#c8c8c8" stroke-width=".8"/><circle cx="5.400" cy="4.500" r="1.500" fill="#c8c8c8"/></svg>
<div style="left:755.5px;top:158px;width:12px;height:10px;background:#181818;border-radius:1px;"></div>
<svg style="left:756px;top:158.5px;" width="11" height="9" viewBox="0 0 11 9"><path d="M.8 3.200h1.800l2.400-2.200v7l-2.400-2.200h-1.800z" fill="#4a9ff2"/><path d="M6.300 2.600c1 1 1 2.800 0 3.800M7.800 1.400c1.800 1.800 1.800 4.400 0 6.200" fill="none" stroke="#4a9ff2" stroke-width=".8"/></svg>
<svg style="left:770px;top:158.5px;" width="10" height="9" viewBox="0 0 10 9"><rect x="1" y=".8" width="8" height="7.400" fill="none" stroke="#c8c8c8" stroke-width=".8" stroke-dasharray="1.400 1"/><rect x="3.200" y="3" width="3.600" height="3" fill="none" stroke="#c8c8c8" stroke-width=".6"/></svg>
<svg style="left:786px;top:158.5px;" width="10" height="9" viewBox="0 0 10 9"><path d="M1 4v4h8v-4" fill="none" stroke="#c8c8c8" stroke-width="1"/><path d="M5 6.500v-4.500M3 3.600l2-2.400l2 2.400z" stroke="#c8c8c8" stroke-width=".8" fill="#c8c8c8"/></svg>
<svg style="left:688.4px;top:170.8px;" width="7.8" height="7.8" viewBox="0 0 7.8 7.8"><rect x=".4" y=".4" width="7" height="7" rx=".7" fill="none" stroke="#8a8a8a" stroke-width=".7"/></svg>
<div class="t" style="left:697px;top:169px;height:10px;line-height:10px;font-size:6.3px;color:#b4b4b4;transform:translate(0.9px,0.7px) scaleY(1.12) rotate(.03deg);letter-spacing:-0.1px;">Cache Before Playback</div>
<div class="t" style="left:688px;top:182px;height:10px;line-height:10px;font-size:6.3px;color:#a4a4a4;transform:translate(0.8px,0px) scaleY(1.12) rotate(.03deg);letter-spacing:-0.1px;">Range</div>
<div style="left:688.8px;top:193.1px;width:108px;height:9.6px;background:#1b1b1b;border-radius:1px;"></div>
<div class="t" style="left:692px;top:193px;height:10px;line-height:10px;font-size:6.3px;color:#cacaca;transform:translate(0.8px,0.1px) scaleY(1.12) rotate(.03deg);letter-spacing:-0.1px;">Work Area Extended By Current ...</div>
<svg style="left:789px;top:196.3px;" width="6" height="4" viewBox="0 0 6 4"><path d="M.6 .6l1.900 1.900l1.900-1.900" fill="none" stroke="#b4b4b4" stroke-width=".8"/></svg>
<div class="t" style="left:688px;top:204px;height:10px;line-height:10px;font-size:6.3px;color:#a4a4a4;transform:translate(0.8px,0.6px) scaleY(1.12) rotate(.03deg);letter-spacing:-0.1px;">Play From</div>
<div style="left:688.8px;top:216px;width:108px;height:9.6px;background:#1b1b1b;border-radius:1px;"></div>
<div class="t" style="left:692px;top:216px;height:10px;line-height:10px;font-size:6.3px;color:#cacaca;transform:translate(0.8px,0px) scaleY(1.12) rotate(.03deg);letter-spacing:-0.1px;">Start Of Range</div>
<svg style="left:789px;top:219.2px;" width="6" height="4" viewBox="0 0 6 4"><path d="M.6 .6l1.900 1.900l1.900-1.900" fill="none" stroke="#b4b4b4" stroke-width=".8"/></svg>
<div class="t" style="left:688px;top:227px;height:10px;line-height:10px;font-size:6.3px;color:#a4a4a4;transform:translate(0.8px,0px) scaleY(1.12) rotate(.03deg);letter-spacing:-0.1px;">Frame Rate</div>
<div class="t" style="left:728px;top:227px;height:10px;line-height:10px;font-size:6.3px;color:#a4a4a4;transform:translate(0px,0px) scaleY(1.12) rotate(.03deg);letter-spacing:-0.1px;">Skip</div>
<div class="t" style="left:754px;top:227px;height:10px;line-height:10px;font-size:6.3px;color:#a4a4a4;transform:translate(0.3px,0px) scaleY(1.12) rotate(.03deg);letter-spacing:-0.1px;">Resolution</div>
<div style="left:688.8px;top:237.9px;width:36.4px;height:9.6px;background:#1b1b1b;border-radius:1px;"></div>
<div class="t" style="left:692px;top:237px;height:10px;line-height:10px;font-size:6.3px;color:#cacaca;transform:translate(0.8px,0.9px) scaleY(1.12) rotate(.03deg);letter-spacing:-0.1px;">(25)</div>
<svg style="left:717.4px;top:241.1px;" width="6" height="4" viewBox="0 0 6 4"><path d="M.6 .6l1.900 1.900l1.900-1.900" fill="none" stroke="#b4b4b4" stroke-width=".8"/></svg>
<div style="left:715.1px;top:237.9px;width:0.8px;height:9.6px;background:#262626;"></div>
<div style="left:728px;top:237.9px;width:23.3px;height:9.6px;background:#1b1b1b;border-radius:1px;"></div>
<div class="t" style="left:732px;top:237px;height:10px;line-height:10px;font-size:6.3px;color:#cacaca;transform:translate(0px,0.9px) scaleY(1.12) rotate(.03deg);letter-spacing:-0.1px;">5</div>
<svg style="left:743.5px;top:241.1px;" width="6" height="4" viewBox="0 0 6 4"><path d="M.6 .6l1.900 1.900l1.900-1.900" fill="none" stroke="#b4b4b4" stroke-width=".8"/></svg>
<div style="left:741.5px;top:237.9px;width:0.8px;height:9.6px;background:#262626;"></div>
<div style="left:754.3px;top:237.9px;width:40.6px;height:9.6px;background:#1b1b1b;border-radius:1px;"></div>
<div class="t" style="left:758px;top:237px;height:10px;line-height:10px;font-size:6.3px;color:#cacaca;transform:translate(0.3px,0.9px) scaleY(1.12) rotate(.03deg);letter-spacing:-0.1px;">Auto</div>
<svg style="left:787.1px;top:241.1px;" width="6" height="4" viewBox="0 0 6 4"><path d="M.6 .6l1.900 1.900l1.900-1.900" fill="none" stroke="#b4b4b4" stroke-width=".8"/></svg>
<svg style="left:688.4px;top:250.5px;" width="7.8" height="7.8" viewBox="0 0 7.8 7.8"><rect x=".4" y=".4" width="7" height="7" rx=".7" fill="none" stroke="#8a8a8a" stroke-width=".7"/></svg>
<div class="t" style="left:697px;top:249px;height:10px;line-height:10px;font-size:6.3px;color:#b4b4b4;transform:translate(0.9px,0.4px) scaleY(1.12) rotate(.03deg);letter-spacing:-0.1px;">Full Screen</div>
<div style="left:688.8px;top:261.2px;width:108px;height:0.6px;background:#2e2e2e;"></div>
<div class="t" style="left:688px;top:263px;height:10px;line-height:10px;font-size:6.3px;color:#a4a4a4;transform:translate(0.8px,0.1px) scaleY(1.12) rotate(.03deg);letter-spacing:-0.1px;">On (Option+Numpad .) Stop:</div>
<svg style="left:688.4px;top:275.1px;" width="7.8" height="7.8" viewBox="0 0 7.8 7.8"><rect x=".4" y=".4" width="7" height="7" rx=".7" fill="#3a3a3a" stroke="#9a9a9a" stroke-width=".7"/><path d="M1.800 4l1.600 1.700l2.800-3.800" fill="none" stroke="#e0e0e0" stroke-width=".9"/></svg>
<div class="t" style="left:697px;top:274px;height:10px;line-height:10px;font-size:6.3px;color:#b4b4b4;transform:translate(0.9px,0px) scaleY(1.12) rotate(.03deg);letter-spacing:-0.1px;">If caching, play cached frames</div>
<svg style="left:688.4px;top:285.3px;" width="7.8" height="7.8" viewBox="0 0 7.8 7.8"><rect x=".4" y=".4" width="7" height="7" rx=".7" fill="none" stroke="#8a8a8a" stroke-width=".7"/></svg>
<div class="t" style="left:697px;top:284px;height:10px;line-height:10px;font-size:6.3px;color:#b4b4b4;transform:translate(0.9px,0.2px) scaleY(1.12) rotate(.03deg);letter-spacing:-0.1px;">Move time to preview time</div>
<div style="left:686px;top:295.4px;width:114px;height:0.6px;background:#2e2e2e;"></div>
<div style="left:0px;top:302px;width:808px;height:151px;background:#1f5a94;"></div>
<div style="left:0px;top:302px;width:808px;height:1px;background:#2b7fd6;"></div>
<div style="left:1.1px;top:303px;width:806.9px;height:150px;background:#262626;"></div>
<svg style="left:5.5px;top:307.3px;" width="6" height="6" viewBox="0 0 6 6"><path d="M1.600 1.600l2.600 2.600M4.200 1.600l-2.600 2.600" stroke="#8a8a8a" stroke-width=".7"/></svg>
<div style="left:15.2px;top:307.4px;width:5.2px;height:5.2px;background:#b59f7b;"></div>
<div class="t" style="left:26px;top:305px;height:10px;line-height:10px;font-size:6.4px;color:#c4c4c4;transform:translate(0.9px,0px) scaleY(1.12) rotate(.03deg);letter-spacing:-0.05px;">Full_Video</div>
<div style="left:61.5px;top:307.5px;width:5.2px;height:1px;background:#909090;"></div>
<div style="left:61.5px;top:309.5px;width:5.2px;height:1px;background:#909090;"></div>
<div style="left:61.5px;top:311.5px;width:5.2px;height:1px;background:#909090;"></div>
<div style="left:7.4px;top:314.8px;width:59.4px;height:1.7px;background:#8a8a8a;"></div>
<div style="left:87.2px;top:307.4px;width:5.2px;height:5.2px;background:#b59f7b;"></div>
<div class="t" style="left:98px;top:305px;height:10px;line-height:10px;font-size:6.3px;color:#b2b2b2;transform:translate(0.7px,0px) scaleY(1.12) rotate(.03deg);letter-spacing:-0.05px;">Intro</div>
<div style="left:142px;top:307.4px;width:5.2px;height:5.2px;background:#b59f7b;"></div>
<div class="t" style="left:153px;top:305px;height:10px;line-height:10px;font-size:6.3px;color:#b2b2b2;transform:translate(0.5px,0px) scaleY(1.12) rotate(.03deg);letter-spacing:-0.05px;">Bedroom_Wide</div>
<div style="left:228px;top:307.4px;width:5.2px;height:5.2px;background:#b59f7b;"></div>
<div class="t" style="left:239px;top:305px;height:10px;line-height:10px;font-size:6.3px;color:#b2b2b2;transform:translate(0.5px,0px) scaleY(1.12) rotate(.03deg);letter-spacing:-0.05px;">Bedroom_Aki</div>
<div style="left:308.4px;top:307.4px;width:5.2px;height:5.2px;background:#b59f7b;"></div>
<div class="t" style="left:319px;top:305px;height:10px;line-height:10px;font-size:6.3px;color:#b2b2b2;transform:translate(0.9px,0px) scaleY(1.12) rotate(.03deg);letter-spacing:-0.05px;">Aki</div>
<div style="left:359.3px;top:307.4px;width:5.2px;height:5.2px;background:#b59f7b;"></div>
<div class="t" style="left:370px;top:305px;height:10px;line-height:10px;font-size:6.3px;color:#b2b2b2;transform:translate(0.8px,0px) scaleY(1.12) rotate(.03deg);letter-spacing:-0.05px;">Aki2</div>
<div style="left:413.7px;top:307.4px;width:5.2px;height:5.2px;background:#b59f7b;"></div>
<div class="t" style="left:425px;top:305px;height:10px;line-height:10px;font-size:6.3px;color:#b2b2b2;transform:translate(0.2px,0px) scaleY(1.12) rotate(.03deg);letter-spacing:-0.05px;">Bedroom_Sam</div>
<div style="left:496.9px;top:307.4px;width:5.2px;height:5.2px;background:#b59f7b;"></div>
<div class="t" style="left:508px;top:305px;height:10px;line-height:10px;font-size:6.3px;color:#b2b2b2;transform:translate(0.4px,0px) scaleY(1.12) rotate(.03deg);letter-spacing:-0.05px;">sam</div>
<div style="left:551.5px;top:307.4px;width:5.2px;height:5.2px;background:#b59f7b;"></div>
<div class="t" style="left:563px;top:305px;height:10px;line-height:10px;font-size:6.3px;color:#b2b2b2;transform:translate(0px,0px) scaleY(1.12) rotate(.03deg);letter-spacing:-0.05px;">Sam2</div>
<div style="left:608.7px;top:307.4px;width:5.2px;height:5.2px;background:#b59f7b;"></div>
<div class="t" style="left:620px;top:305px;height:10px;line-height:10px;font-size:6.3px;color:#b2b2b2;transform:translate(0.2px,0px) scaleY(1.12) rotate(.03deg);letter-spacing:-0.05px;">School_Bathroom</div>
<div style="left:701.2px;top:307.4px;width:5.2px;height:5.2px;background:#b59f7b;"></div>
<div class="t" style="left:712px;top:305px;height:10px;line-height:10px;font-size:6.3px;color:#b2b2b2;transform:translate(0.7px,0px) scaleY(1.12) rotate(.03deg);letter-spacing:-0.05px;">Carscene</div>
<div style="left:768.8px;top:307.4px;width:5.2px;height:5.2px;background:#b59f7b;"></div>
<div class="t" style="left:780px;top:305px;height:10px;line-height:10px;font-size:6.3px;color:#b2b2b2;transform:translate(0.3px,0px) scaleY(1.12) rotate(.03deg);letter-spacing:-0.05px;">Ki</div>
<svg style="left:798.5px;top:306.7px;" width="9" height="7" viewBox="0 0 9 7"><path d="M1 .8l2.600 2.600l-2.600 2.600M4.600 .8l2.600 2.600l-2.600 2.600" fill="none" stroke="#d0d0d0" stroke-width="1"/></svg>
<div class="t" style="left:7px;top:318px;height:12px;line-height:12px;font-size:8.8px;color:#4a9ff2;transform:translate(0.5px,0.2px) scaleY(1.12) rotate(.03deg);font-weight:700;letter-spacing:-0.1px;">0:00:35:19</div>
<div class="t" style="left:7px;top:328px;height:8px;line-height:8px;font-size:5.4px;color:#2f7fd0;transform:translate(0.5px,0.6px) scaleY(1.12) rotate(.03deg);letter-spacing:-0.05px;">00894 (25.00 fps)</div>
<div style="left:57.5px;top:322px;width:128.8px;height:10.2px;background:#161616;border-radius:1px;"></div>
<svg style="left:60px;top:323.2px;" width="12" height="9" viewBox="0 0 12 9"><circle cx="4.600" cy="3.400" r="2" fill="none" stroke="#b0b0b0" stroke-width=".8"/><path d="M3.200 4.900l-2 2.300" stroke="#b0b0b0" stroke-width=".9"/><path d="M7 5.300h2.400l-1.200 1.500z" fill="#b0b0b0"/></svg>
<svg style="left:190px;top:320px;" width="104" height="14" viewBox="190 320 104 14"><g transform="translate(200.3 327)"><path d="M-4.500-2h4l2 2.500h2.500M-0.500-2" fill="none" stroke="#bcbcbc" stroke-width=".8"/><circle cx="-4" cy="-2" r="1.100" fill="#bcbcbc"/><rect x="2.200" y="-1" width="2.600" height="2.600" fill="#bcbcbc"/><rect x="2.200" y="2" width="2.600" height="2" fill="#bcbcbc"/></g><g transform="translate(218.6 327)"><path d="M0-1.500l3.200 1.600v3.400l-3.200 1.600l-3.200-1.600v-3.400z" fill="none" stroke="#bcbcbc" stroke-width=".8"/><path d="M-3.200 .1l3.200 1.600l3.200-1.600M0 1.700v3.400" fill="none" stroke="#bcbcbc" stroke-width=".6"/><path d="M-3-4.600l.6 1.500l1.500.6l-1.500.6l-.6 1.500l-.6-1.500l-1.500-.6l1.500-.6z" fill="#bcbcbc"/></g><g transform="translate(237.6 327)"><path d="M-4.200 .2c0-2 1.800-3.400 4.200-3.400s4.200 1.400 4.200 3.400z" fill="#bcbcbc"/><rect x="-4.200" y="1" width="8.400" height="3" fill="none" stroke="#bcbcbc" stroke-width=".7"/><path d="M-1.400 1v3M1.400 1v3" stroke="#bcbcbc" stroke-width=".6"/></g><g transform="translate(252.5 327)"><rect x="-3.800" y="-1.600" width="5.400" height="5.400" fill="none" stroke="#bcbcbc" stroke-width=".8"/><rect x="-1.800" y="-3.800" width="5.600" height="5.600" fill="#bcbcbc"/><path d="M-.4-2h3M-.4-.4h3" stroke="#232323" stroke-width=".6"/></g><g transform="translate(267 327)"><ellipse cx="0" cy="0" rx="4.400" ry="2.600" transform="rotate(-35)" fill="#bcbcbc"/><ellipse cx="0" cy="0" rx="2.600" ry="1.100" transform="rotate(-35)" fill="none" stroke="#232323" stroke-width=".6"/></g><g transform="translate(286 327)"><rect x="-3.800" y="-2.800" width="7.600" height="6.600" fill="none" stroke="#bcbcbc" stroke-width=".8"/><path d="M-2.600-4.400v2M2.600-4.400v2" stroke="#bcbcbc" stroke-width=".9"/><path d="M-2.600-1.400l4.800 4" stroke="#bcbcbc" stroke-width=".7"/></g></svg>
<div style="left:1px;top:337.4px;width:298.5px;height:0.7px;background:#1a1a1a;"></div>
<div style="left:1px;top:338.1px;width:298.5px;height:10px;background:#272727;"></div>
<div style="left:1px;top:348.1px;width:298.5px;height:0.6px;background:#1a1a1a;"></div>
<div style="left:39.4px;top:339.5px;width:0.6px;height:7.2px;background:#383838;"></div>
<div style="left:75.2px;top:339.5px;width:0.6px;height:7.2px;background:#383838;"></div>
<div style="left:148.5px;top:339.5px;width:0.6px;height:7.2px;background:#383838;"></div>
<div style="left:224.7px;top:339.5px;width:0.6px;height:7.2px;background:#383838;"></div>
<div style="left:291.5px;top:339.5px;width:0.6px;height:7.2px;background:#383838;"></div>
<svg style="left:1px;top:338px;" width="298" height="10.5" viewBox="1 338 298 10.500"><g transform="translate(7 343.3)"><path d="M-3.600 0c1.600-2.700 5.600-2.700 7.200 0c-1.600 2.700-5.600 2.700-7.200 0z" fill="none" stroke="#a4a4a4" stroke-width=".8"/><circle cx="0" cy="0" r="1.200" fill="#a4a4a4"/></g><g transform="translate(15.4 343.3)"><path d="M-3.400-1.100h1.400l2-1.900v6l-2-1.900h-1.400z" fill="#a4a4a4"/><path d="M1-1.600c.9 1 .9 2.200 0 3.200M2.200-2.800c1.600 1.700 1.600 3.900 0 5.600" fill="none" stroke="#a4a4a4" stroke-width=".7"/></g><g transform="translate(23.8 343.3)"><circle cx="0" cy="0" r="1.700" fill="#a4a4a4"/></g><g transform="translate(32.1 343.3)"><rect x="-2.500" y="-.6" width="5" height="3.800" rx=".4" fill="#a4a4a4"/><path d="M-1.500-.6v-1.200a1.500 1.500 0 0 1 3 0v1.200" fill="none" stroke="#a4a4a4" stroke-width=".8"/></g><g transform="translate(49.7 343.3)"><path d="M-3.400-3.400h3l3.600 3.600l-3 3l-3.600-3.600z" fill="#a4a4a4"/><circle cx="-2" cy="-2" r=".7" fill="#272727"/></g><g transform="translate(154 343.3)"><circle cx="0" cy="-2.500" r=".9" fill="#a4a4a4"/><path d="M0-2v4.600M-3.600 2.800h7.200" stroke="#a4a4a4" stroke-width=".8" fill="none"/><path d="M-.5-1c-2.200 0-3 1.200-3 2.300c0 1 .8 1.500 1.700 1.500M.5-1c2.200 0 3 1.200 3 2.300c0 1-.8 1.500-1.700 1.500" stroke="#a4a4a4" stroke-width=".8" fill="none"/></g><g transform="translate(162.3 343.3)"><path d="M0-3.200v6.400M-3.200 0h6.400M-2.200-2.200l4.400 4.400M2.200-2.200l-4.400 4.400" stroke="#a4a4a4" stroke-width=".6"/><circle cx="0" cy="0" r="1.100" fill="#272727" stroke="#a4a4a4" stroke-width=".5"/></g><g transform="translate(170.7 343.3)"><path d="M-2.800-3l5.600 6" stroke="#a4a4a4" stroke-width=".8"/></g><g transform="translate(187.4 343.3)"><rect x="-3.200" y="-3" width="6.400" height="6" rx=".5" fill="#a4a4a4"/><rect x="-1.800" y="-1.600" width="3.600" height="1.600" fill="#272727"/></g><g transform="translate(196.1 343.3)"><ellipse cx="0" cy="0" rx="3.600" ry="2.400" transform="rotate(-40)" fill="none" stroke="#a4a4a4" stroke-width=".8"/><ellipse cx="0" cy="0" rx="1.800" ry=".8" transform="rotate(-40)" fill="#a4a4a4"/></g><g transform="translate(204.6 343.3)"><circle cx="0" cy="0" r="3" fill="none" stroke="#a4a4a4" stroke-width=".7"/><path d="M0-3a3 3 0 0 0 0 6z" fill="#a4a4a4"/></g><g transform="translate(213.5 343.3)"><path d="M0-3.200l3 1.500v3.400l-3 1.500l-3-1.500v-3.400z" fill="none" stroke="#a4a4a4" stroke-width=".7"/><path d="M-3-1.700l3 1.500l3-1.500M0-.2v3.400" fill="none" stroke="#a4a4a4" stroke-width=".6"/></g></svg>
<div class="t" style="left:176px;top:337px;height:10px;line-height:10px;font-size:8px;color:#a4a4a4;transform:translate(0.3px,0.9px) scaleY(1.12) rotate(.03deg);font-style:italic;font-family:'Liberation Serif',serif;">fx</div>
<div class="t" style="left:61px;top:338px;height:10px;line-height:10px;font-size:5.2px;color:#8a8a8a;transform:translate(0.3px,0.3px) scaleY(1.12) rotate(.03deg);">#</div>
<div class="t" style="left:78px;top:338px;height:10px;line-height:10px;font-size:5.5px;color:#8a8a8a;transform:translate(0.9px,0.3px) scaleY(1.12) rotate(.03deg);letter-spacing:-0.05px;">Source Name</div>
<div class="t" style="left:228px;top:338px;height:10px;line-height:10px;font-size:5.5px;color:#8a8a8a;transform:translate(0.7px,0.3px) scaleY(1.12) rotate(.03deg);letter-spacing:-0.05px;">Parent &amp; Link</div>
<div style="left:1.1px;top:348.2px;width:298.4px;height:99px;background:#1c1c1c;"></div>
<div style="left:1.1px;top:348.99px;width:298.4px;height:8.63px;background:#333333;"></div>
<div style="left:20.4px;top:349.04px;width:6.7px;height:8.53px;background:#262626;"></div>
<div style="left:29px;top:349.04px;width:7px;height:8.53px;background:#262626;"></div>
<div style="left:149.9px;top:349.04px;width:8.3px;height:8.53px;background:#262626;"></div>
<div style="left:167.3px;top:349.04px;width:7.9px;height:8.53px;background:#262626;"></div>
<div style="left:201px;top:349.04px;width:7.3px;height:8.53px;background:#262626;"></div>
<div style="left:49.2px;top:350px;width:6.5px;height:6.6px;background:#a9c9b0;"></div>
<div class="t" style="left:61px;top:348px;height:10px;line-height:10px;font-size:6.3px;color:#c0c0c0;transform:translate(0.3px,0.3px) scaleY(1.12) rotate(.03deg);">1</div>
<svg style="left:77.5px;top:349.5px;" width="7" height="7.6" viewBox="0 0 7 7.6"><path d="M.8 .3h3.400l1.900 1.900v5.100h-5.300z" fill="#f2f2f2" stroke="#9a9a9a" stroke-width=".4"/><path d="M2.800 3.200l1.800.4v2.200" fill="none" stroke="#3a7ad8" stroke-width=".6"/><circle cx="2.600" cy="5.600" r=".8" fill="#3a7ad8"/></svg>
<div class="t" style="left:87px;top:348px;height:10px;line-height:10px;font-size:6.8px;color:#dcdcdc;transform:translate(0.6px,0.3px) scaleY(1.12) rotate(.03deg);letter-spacing:-0.15px;">Kevin -...Leod.mp3</div>
<div style="left:238.4px;top:349.14px;width:49.1px;height:8.33px;background:#1e1e1e;border-radius:1px;"></div>
<div class="t" style="left:242px;top:348px;height:10px;line-height:10px;font-size:6.6px;color:#dcdcdc;transform:translate(0px,0.4px) scaleY(1.12) rotate(.03deg);letter-spacing:-0.25px;">None</div>
<svg style="left:280.7px;top:351.3px;" width="6" height="4" viewBox="0 0 6 4"><path d="M.6 .6l2.300 2.300l2.300-2.300" fill="none" stroke="#b4b4b4" stroke-width=".8"/></svg>
<div style="left:1.1px;top:387.11px;width:298.4px;height:8.63px;background:#333333;"></div>
<div style="left:3.1px;top:387.16px;width:7.4px;height:8.53px;background:#262626;"></div>
<div style="left:11.8px;top:387.16px;width:7.4px;height:8.53px;background:#262626;"></div>
<div style="left:20.4px;top:387.16px;width:6.7px;height:8.53px;background:#262626;"></div>
<div style="left:29px;top:387.16px;width:7px;height:8.53px;background:#262626;"></div>
<div style="left:149.9px;top:387.16px;width:8.3px;height:8.53px;background:#262626;"></div>
<div style="left:159.2px;top:387.16px;width:7.1px;height:8.53px;background:#262626;"></div>
<div style="left:167.3px;top:387.16px;width:7.9px;height:8.53px;background:#262626;"></div>
<div style="left:193px;top:387.16px;width:7px;height:8.53px;background:#262626;"></div>
<div style="left:201px;top:387.16px;width:7.3px;height:8.53px;background:#262626;"></div>
<div style="left:209.3px;top:387.16px;width:7.5px;height:8.53px;background:#262626;"></div>
<div style="left:49.2px;top:388.12px;width:6.5px;height:6.6px;background:#b59f7b;"></div>
<div class="t" style="left:61px;top:386px;height:10px;line-height:10px;font-size:6.3px;color:#c0c0c0;transform:translate(0.3px,0.42px) scaleY(1.12) rotate(.03deg);">2</div>
<svg style="left:76.3px;top:387.72px;" width="9" height="7.6" viewBox="0 0 9 7.6"><rect x=".3" y=".4" width="8.400" height="6.800" rx=".6" fill="#cfcfcf"/><rect x="1.700" y="1.300" width="5.600" height="5" fill="#474747"/><path d="M.9 1.300v5M8.100 1.300v5" stroke="#6a6a6a" stroke-width=".5" stroke-dasharray=".8 .7"/><circle cx="3.300" cy="2.900" r="1.150" fill="#3f8ff0"/><circle cx="5.600" cy="3.600" r="1.150" fill="#e8433a"/><circle cx="4.200" cy="4.900" r="1.150" fill="#48b848"/></svg>
<div class="t" style="left:87px;top:386px;height:10px;line-height:10px;font-size:6.8px;color:#dcdcdc;transform:translate(0.6px,0.42px) scaleY(1.12) rotate(.03deg);letter-spacing:-0.15px;">Intro</div>
<div style="left:238.4px;top:387.26px;width:49.1px;height:8.33px;background:#1e1e1e;border-radius:1px;"></div>
<div class="t" style="left:242px;top:386px;height:10px;line-height:10px;font-size:6.6px;color:#dcdcdc;transform:translate(0px,0.52px) scaleY(1.12) rotate(.03deg);letter-spacing:-0.25px;">None</div>
<svg style="left:280.7px;top:389.42px;" width="6" height="4" viewBox="0 0 6 4"><path d="M.6 .6l2.300 2.300l2.300-2.300" fill="none" stroke="#b4b4b4" stroke-width=".8"/></svg>
<div style="left:1.1px;top:396.63px;width:298.4px;height:8.63px;background:#333333;"></div>
<div style="left:3.1px;top:396.69px;width:7.4px;height:8.53px;background:#262626;"></div>
<div style="left:11.8px;top:396.69px;width:7.4px;height:8.53px;background:#262626;"></div>
<div style="left:20.4px;top:396.69px;width:6.7px;height:8.53px;background:#262626;"></div>
<div style="left:29px;top:396.69px;width:7px;height:8.53px;background:#262626;"></div>
<div style="left:149.9px;top:396.69px;width:8.3px;height:8.53px;background:#262626;"></div>
<div style="left:159.2px;top:396.69px;width:7.1px;height:8.53px;background:#262626;"></div>
<div style="left:167.3px;top:396.69px;width:7.9px;height:8.53px;background:#262626;"></div>
<div style="left:193px;top:396.69px;width:7px;height:8.53px;background:#262626;"></div>
<div style="left:201px;top:396.69px;width:7.3px;height:8.53px;background:#262626;"></div>
<div style="left:209.3px;top:396.69px;width:7.5px;height:8.53px;background:#262626;"></div>
<div style="left:49.2px;top:397.65px;width:6.5px;height:6.6px;background:#b59f7b;"></div>
<div class="t" style="left:61px;top:395px;height:10px;line-height:10px;font-size:6.3px;color:#c0c0c0;transform:translate(0.3px,0.95px) scaleY(1.12) rotate(.03deg);">3</div>
<svg style="left:76.3px;top:397.25px;" width="9" height="7.6" viewBox="0 0 9 7.6"><rect x=".3" y=".4" width="8.400" height="6.800" rx=".6" fill="#cfcfcf"/><rect x="1.700" y="1.300" width="5.600" height="5" fill="#474747"/><path d="M.9 1.300v5M8.100 1.300v5" stroke="#6a6a6a" stroke-width=".5" stroke-dasharray=".8 .7"/><circle cx="3.300" cy="2.900" r="1.150" fill="#3f8ff0"/><circle cx="5.600" cy="3.600" r="1.150" fill="#e8433a"/><circle cx="4.200" cy="4.900" r="1.150" fill="#48b848"/></svg>
<div class="t" style="left:87px;top:395px;height:10px;line-height:10px;font-size:6.8px;color:#dcdcdc;transform:translate(0.6px,0.95px) scaleY(1.12) rotate(.03deg);letter-spacing:-0.15px;">Bedroom_Wide</div>
<div style="left:238.4px;top:396.79px;width:49.1px;height:8.33px;background:#1e1e1e;border-radius:1px;"></div>
<div class="t" style="left:242px;top:396px;height:10px;line-height:10px;font-size:6.6px;color:#dcdcdc;transform:translate(0px,0.05px) scaleY(1.12) rotate(.03deg);letter-spacing:-0.25px;">None</div>
<svg style="left:280.7px;top:398.95px;" width="6" height="4" viewBox="0 0 6 4"><path d="M.6 .6l2.300 2.300l2.300-2.300" fill="none" stroke="#b4b4b4" stroke-width=".8"/></svg>
<div style="left:1.1px;top:406.17px;width:298.4px;height:8.63px;background:#333333;"></div>
<div style="left:3.1px;top:406.22px;width:7.4px;height:8.53px;background:#262626;"></div>
<div style="left:11.8px;top:406.22px;width:7.4px;height:8.53px;background:#262626;"></div>
<div style="left:20.4px;top:406.22px;width:6.7px;height:8.53px;background:#262626;"></div>
<div style="left:29px;top:406.22px;width:7px;height:8.53px;background:#262626;"></div>
<div style="left:149.9px;top:406.22px;width:8.3px;height:8.53px;background:#262626;"></div>
<div style="left:159.2px;top:406.22px;width:7.1px;height:8.53px;background:#262626;"></div>
<div style="left:167.3px;top:406.22px;width:7.9px;height:8.53px;background:#262626;"></div>
<div style="left:193px;top:406.22px;width:7px;height:8.53px;background:#262626;"></div>
<div style="left:201px;top:406.22px;width:7.3px;height:8.53px;background:#262626;"></div>
<div style="left:209.3px;top:406.22px;width:7.5px;height:8.53px;background:#262626;"></div>
<div style="left:49.2px;top:407.18px;width:6.5px;height:6.6px;background:#b59f7b;"></div>
<div class="t" style="left:61px;top:405px;height:10px;line-height:10px;font-size:6.3px;color:#c0c0c0;transform:translate(0.3px,0.48px) scaleY(1.12) rotate(.03deg);">4</div>
<svg style="left:76.3px;top:406.78px;" width="9" height="7.6" viewBox="0 0 9 7.6"><rect x=".3" y=".4" width="8.400" height="6.800" rx=".6" fill="#cfcfcf"/><rect x="1.700" y="1.300" width="5.600" height="5" fill="#474747"/><path d="M.9 1.300v5M8.100 1.300v5" stroke="#6a6a6a" stroke-width=".5" stroke-dasharray=".8 .7"/><circle cx="3.300" cy="2.900" r="1.150" fill="#3f8ff0"/><circle cx="5.600" cy="3.600" r="1.150" fill="#e8433a"/><circle cx="4.200" cy="4.900" r="1.150" fill="#48b848"/></svg>
<div class="t" style="left:87px;top:405px;height:10px;line-height:10px;font-size:6.8px;color:#dcdcdc;transform:translate(0.6px,0.48px) scaleY(1.12) rotate(.03deg);letter-spacing:-0.15px;">Bedroom_Aki</div>
<div style="left:238.4px;top:406.32px;width:49.1px;height:8.33px;background:#1e1e1e;border-radius:1px;"></div>
<div class="t" style="left:242px;top:405px;height:10px;line-height:10px;font-size:6.6px;color:#dcdcdc;transform:translate(0px,0.58px) scaleY(1.12) rotate(.03deg);letter-spacing:-0.25px;">None</div>
<svg style="left:280.7px;top:408.48px;" width="6" height="4" viewBox="0 0 6 4"><path d="M.6 .6l2.300 2.300l2.300-2.300" fill="none" stroke="#b4b4b4" stroke-width=".8"/></svg>
<div style="left:1.1px;top:415.69px;width:298.4px;height:8.63px;background:#333333;"></div>
<div style="left:3.1px;top:415.75px;width:7.4px;height:8.53px;background:#262626;"></div>
<div style="left:11.8px;top:415.75px;width:7.4px;height:8.53px;background:#262626;"></div>
<div style="left:20.4px;top:415.75px;width:6.7px;height:8.53px;background:#262626;"></div>
<div style="left:29px;top:415.75px;width:7px;height:8.53px;background:#262626;"></div>
<div style="left:149.9px;top:415.75px;width:8.3px;height:8.53px;background:#262626;"></div>
<div style="left:159.2px;top:415.75px;width:7.1px;height:8.53px;background:#262626;"></div>
<div style="left:167.3px;top:415.75px;width:7.9px;height:8.53px;background:#262626;"></div>
<div style="left:193px;top:415.75px;width:7px;height:8.53px;background:#262626;"></div>
<div style="left:201px;top:415.75px;width:7.3px;height:8.53px;background:#262626;"></div>
<div style="left:209.3px;top:415.75px;width:7.5px;height:8.53px;background:#262626;"></div>
<div style="left:49.2px;top:416.71px;width:6.5px;height:6.6px;background:#b59f7b;"></div>
<div class="t" style="left:61px;top:415px;height:10px;line-height:10px;font-size:6.3px;color:#c0c0c0;transform:translate(0.3px,0.01px) scaleY(1.12) rotate(.03deg);">5</div>
<svg style="left:76.3px;top:416.31px;" width="9" height="7.6" viewBox="0 0 9 7.6"><rect x=".3" y=".4" width="8.400" height="6.800" rx=".6" fill="#cfcfcf"/><rect x="1.700" y="1.300" width="5.600" height="5" fill="#474747"/><path d="M.9 1.300v5M8.100 1.300v5" stroke="#6a6a6a" stroke-width=".5" stroke-dasharray=".8 .7"/><circle cx="3.300" cy="2.900" r="1.150" fill="#3f8ff0"/><circle cx="5.600" cy="3.600" r="1.150" fill="#e8433a"/><circle cx="4.200" cy="4.900" r="1.150" fill="#48b848"/></svg>
<div class="t" style="left:87px;top:415px;height:10px;line-height:10px;font-size:6.8px;color:#dcdcdc;transform:translate(0.6px,0.01px) scaleY(1.12) rotate(.03deg);letter-spacing:-0.15px;">Bedroom_Sam</div>
<div style="left:238.4px;top:415.85px;width:49.1px;height:8.33px;background:#1e1e1e;border-radius:1px;"></div>
<div class="t" style="left:242px;top:415px;height:10px;line-height:10px;font-size:6.6px;color:#dcdcdc;transform:translate(0px,0.11px) scaleY(1.12) rotate(.03deg);letter-spacing:-0.25px;">None</div>
<svg style="left:280.7px;top:418.01px;" width="6" height="4" viewBox="0 0 6 4"><path d="M.6 .6l2.300 2.300l2.300-2.300" fill="none" stroke="#b4b4b4" stroke-width=".8"/></svg>
<div style="left:1.1px;top:425.23px;width:298.4px;height:8.63px;background:#4d4d4d;"></div>
<div style="left:3.1px;top:425.28px;width:7.4px;height:8.53px;background:#3c3c3c;"></div>
<div style="left:11.8px;top:425.28px;width:7.4px;height:8.53px;background:#3c3c3c;"></div>
<div style="left:20.4px;top:425.28px;width:6.7px;height:8.53px;background:#3c3c3c;"></div>
<div style="left:29px;top:425.28px;width:7px;height:8.53px;background:#3c3c3c;"></div>
<div style="left:149.9px;top:425.28px;width:8.3px;height:8.53px;background:#3c3c3c;"></div>
<div style="left:159.2px;top:425.28px;width:7.1px;height:8.53px;background:#3c3c3c;"></div>
<div style="left:167.3px;top:425.28px;width:7.9px;height:8.53px;background:#3c3c3c;"></div>
<div style="left:193px;top:425.28px;width:7px;height:8.53px;background:#3c3c3c;"></div>
<div style="left:201px;top:425.28px;width:7.3px;height:8.53px;background:#3c3c3c;"></div>
<div style="left:209.3px;top:425.28px;width:7.5px;height:8.53px;background:#3c3c3c;"></div>
<div style="left:49.2px;top:426.24px;width:6.5px;height:6.6px;background:#b59f7b;"></div>
<div class="t" style="left:61px;top:424px;height:10px;line-height:10px;font-size:6.3px;color:#c0c0c0;transform:translate(0.3px,0.54px) scaleY(1.12) rotate(.03deg);">6</div>
<svg style="left:76.3px;top:425.84px;" width="9" height="7.6" viewBox="0 0 9 7.6"><rect x=".3" y=".4" width="8.400" height="6.800" rx=".6" fill="#cfcfcf"/><rect x="1.700" y="1.300" width="5.600" height="5" fill="#474747"/><path d="M.9 1.300v5M8.100 1.300v5" stroke="#6a6a6a" stroke-width=".5" stroke-dasharray=".8 .7"/><circle cx="3.300" cy="2.900" r="1.150" fill="#3f8ff0"/><circle cx="5.600" cy="3.600" r="1.150" fill="#e8433a"/><circle cx="4.200" cy="4.900" r="1.150" fill="#48b848"/></svg>
<div style="left:85.6px;top:425.58px;width:63px;height:7.93px;background:#b9b9b9;"></div>
<div class="t" style="left:87px;top:424px;height:10px;line-height:10px;font-size:6.8px;color:#111;transform:translate(0.6px,0.54px) scaleY(1.12) rotate(.03deg);letter-spacing:-0.15px;">School_Bathroom</div>
<div style="left:238.4px;top:425.38px;width:49.1px;height:8.33px;background:#3a3a3a;border-radius:1px;"></div>
<div class="t" style="left:242px;top:424px;height:10px;line-height:10px;font-size:6.6px;color:#dcdcdc;transform:translate(0px,0.64px) scaleY(1.12) rotate(.03deg);letter-spacing:-0.25px;">None</div>
<svg style="left:280.7px;top:427.54px;" width="6" height="4" viewBox="0 0 6 4"><path d="M.6 .6l2.300 2.300l2.300-2.300" fill="none" stroke="#b4b4b4" stroke-width=".8"/></svg>
<div style="left:1.1px;top:434.75px;width:298.4px;height:8.63px;background:#333333;"></div>
<div style="left:3.1px;top:434.81px;width:7.4px;height:8.53px;background:#262626;"></div>
<div style="left:11.8px;top:434.81px;width:7.4px;height:8.53px;background:#262626;"></div>
<div style="left:20.4px;top:434.81px;width:6.7px;height:8.53px;background:#262626;"></div>
<div style="left:29px;top:434.81px;width:7px;height:8.53px;background:#262626;"></div>
<div style="left:149.9px;top:434.81px;width:8.3px;height:8.53px;background:#262626;"></div>
<div style="left:159.2px;top:434.81px;width:7.1px;height:8.53px;background:#262626;"></div>
<div style="left:167.3px;top:434.81px;width:7.9px;height:8.53px;background:#262626;"></div>
<div style="left:193px;top:434.81px;width:7px;height:8.53px;background:#262626;"></div>
<div style="left:201px;top:434.81px;width:7.3px;height:8.53px;background:#262626;"></div>
<div style="left:209.3px;top:434.81px;width:7.5px;height:8.53px;background:#262626;"></div>
<div style="left:49.2px;top:435.77px;width:6.5px;height:6.6px;background:#b59f7b;"></div>
<div class="t" style="left:61px;top:434px;height:10px;line-height:10px;font-size:6.3px;color:#c0c0c0;transform:translate(0.3px,0.07px) scaleY(1.12) rotate(.03deg);">7</div>
<svg style="left:76.3px;top:435.37px;" width="9" height="7.6" viewBox="0 0 9 7.6"><rect x=".3" y=".4" width="8.400" height="6.800" rx=".6" fill="#cfcfcf"/><rect x="1.700" y="1.300" width="5.600" height="5" fill="#474747"/><path d="M.9 1.300v5M8.100 1.300v5" stroke="#6a6a6a" stroke-width=".5" stroke-dasharray=".8 .7"/><circle cx="3.300" cy="2.900" r="1.150" fill="#3f8ff0"/><circle cx="5.600" cy="3.600" r="1.150" fill="#e8433a"/><circle cx="4.200" cy="4.900" r="1.150" fill="#48b848"/></svg>
<div class="t" style="left:87px;top:434px;height:10px;line-height:10px;font-size:6.8px;color:#dcdcdc;transform:translate(0.6px,0.07px) scaleY(1.12) rotate(.03deg);letter-spacing:-0.15px;">Carscene</div>
<div style="left:238.4px;top:434.91px;width:49.1px;height:8.33px;background:#1e1e1e;border-radius:1px;"></div>
<div class="t" style="left:242px;top:434px;height:10px;line-height:10px;font-size:6.6px;color:#dcdcdc;transform:translate(0px,0.17px) scaleY(1.12) rotate(.03deg);letter-spacing:-0.25px;">None</div>
<svg style="left:280.7px;top:437.07px;" width="6" height="4" viewBox="0 0 6 4"><path d="M.6 .6l2.300 2.300l2.300-2.300" fill="none" stroke="#b4b4b4" stroke-width=".8"/></svg>
<div style="left:1.1px;top:444.29px;width:298.4px;height:8.63px;background:#333333;"></div>
<div style="left:3.1px;top:444.34px;width:7.4px;height:8.53px;background:#262626;"></div>
<div style="left:11.8px;top:444.34px;width:7.4px;height:8.53px;background:#262626;"></div>
<div style="left:20.4px;top:444.34px;width:6.7px;height:8.53px;background:#262626;"></div>
<div style="left:29px;top:444.34px;width:7px;height:8.53px;background:#262626;"></div>
<div style="left:149.9px;top:444.34px;width:8.3px;height:8.53px;background:#262626;"></div>
<div style="left:159.2px;top:444.34px;width:7.1px;height:8.53px;background:#262626;"></div>
<div style="left:167.3px;top:444.34px;width:7.9px;height:8.53px;background:#262626;"></div>
<div style="left:193px;top:444.34px;width:7px;height:8.53px;background:#262626;"></div>
<div style="left:201px;top:444.34px;width:7.3px;height:8.53px;background:#262626;"></div>
<div style="left:209.3px;top:444.34px;width:7.5px;height:8.53px;background:#262626;"></div>
<div style="left:49.2px;top:445.3px;width:6.5px;height:6.6px;background:#b59f7b;"></div>
<div class="t" style="left:61px;top:443px;height:10px;line-height:10px;font-size:6.3px;color:#c0c0c0;transform:translate(0.3px,0.6px) scaleY(1.12) rotate(.03deg);">8</div>
<svg style="left:76.3px;top:444.9px;" width="9" height="7.6" viewBox="0 0 9 7.6"><rect x=".3" y=".4" width="8.400" height="6.800" rx=".6" fill="#cfcfcf"/><rect x="1.700" y="1.300" width="5.600" height="5" fill="#474747"/><path d="M.9 1.300v5M8.100 1.300v5" stroke="#6a6a6a" stroke-width=".5" stroke-dasharray=".8 .7"/><circle cx="3.300" cy="2.900" r="1.150" fill="#3f8ff0"/><circle cx="5.600" cy="3.600" r="1.150" fill="#e8433a"/><circle cx="4.200" cy="4.900" r="1.150" fill="#48b848"/></svg>
<div class="t" style="left:87px;top:443px;height:10px;line-height:10px;font-size:6.8px;color:#dcdcdc;transform:translate(0.6px,0.6px) scaleY(1.12) rotate(.03deg);letter-spacing:-0.15px;">Kitchen_wide</div>
<div style="left:238.4px;top:444.44px;width:49.1px;height:8.33px;background:#1e1e1e;border-radius:1px;"></div>
<div class="t" style="left:242px;top:443px;height:10px;line-height:10px;font-size:6.6px;color:#dcdcdc;transform:translate(0px,0.7px) scaleY(1.12) rotate(.03deg);letter-spacing:-0.25px;">None</div>
<svg style="left:280.7px;top:446.6px;" width="6" height="4" viewBox="0 0 6 4"><path d="M.6 .6l2.300 2.300l2.300-2.300" fill="none" stroke="#b4b4b4" stroke-width=".8"/></svg>
<div style="left:1.1px;top:358.51px;width:298.4px;height:8.63px;background:#282828;"></div>
<div style="left:1.1px;top:368.05px;width:298.4px;height:8.63px;background:#282828;"></div>
<div style="left:1.1px;top:377.57px;width:298.4px;height:8.63px;background:#282828;"></div>
<div class="t" style="left:60px;top:357px;height:10px;line-height:10px;font-size:6.4px;color:#b8b8b8;transform:translate(0.9px,0.83px) scaleY(1.12) rotate(.03deg);letter-spacing:-0.1px;">Audio</div>
<div class="t" style="left:79px;top:367px;height:10px;line-height:10px;font-size:6.4px;color:#c8c8c8;transform:translate(0.3px,0.36px) scaleY(1.12) rotate(.03deg);letter-spacing:-0.05px;">Audio Levels</div>
<div class="t" style="left:151px;top:367px;height:10px;line-height:10px;font-size:6.3px;color:#4a9ff2;transform:translate(0.6px,0.36px) scaleY(1.12) rotate(.03deg);letter-spacing:-0.15px;">-30.00</div>
<div class="t" style="left:168px;top:367px;height:10px;line-height:10px;font-size:6.3px;color:#b8b8b8;transform:translate(0.5px,0.36px) scaleY(1.12) rotate(.03deg);letter-spacing:-0.1px;">dB</div>
<div class="t" style="left:70px;top:376px;height:10px;line-height:10px;font-size:6.4px;color:#b8b8b8;transform:translate(0.2px,0.89px) scaleY(1.12) rotate(.03deg);letter-spacing:-0.1px;">Waveform</div>
<svg style="left:1px;top:348px;" width="298" height="105" viewBox="1 348 298 105"><g transform="translate(15.4 353.3)"><path d="M-3.400-1.100h1.400l2-1.900v6l-2-1.900h-1.400z" fill="#c8c8c8"/><path d="M1-1.600c.9 1 .9 2.200 0 3.200M2.200-2.800c1.600 1.700 1.600 3.900 0 5.600" fill="none" stroke="#c8c8c8" stroke-width=".7"/></g><g transform="translate(44.6 353.3)"><path d="M-2 -1l2 2l2-2" fill="none" stroke="#a8a8a8" stroke-width=".8"/></g><g transform="translate(154 353.3)"><circle cx="0" cy="-2.500" r=".9" fill="#c8c8c8"/><path d="M0-2v4.600M-3.600 2.800h7.200" stroke="#c8c8c8" stroke-width=".8" fill="none"/><path d="M-.5-1c-2.200 0-3 1.200-3 2.300c0 1 .8 1.500 1.700 1.500M.5-1c2.200 0 3 1.200 3 2.300c0 1-.8 1.500-1.700 1.500" stroke="#c8c8c8" stroke-width=".8" fill="none"/></g><g transform="translate(171.2 353.3)"><path d="M-2.600 2.800l5.200-5.600" stroke="#c8c8c8" stroke-width=".8"/></g><g transform="translate(231.3 353.3)"><path d="M2.600 .2a2.600 2.600 0 1 0-1 2.100" fill="none" stroke="#c8c8c8" stroke-width=".7"/><circle cx="0" cy=".1" r="1" fill="none" stroke="#c8c8c8" stroke-width=".6"/><path d="M2.600-.8v1.800c0 .8.800.8 1.200.4" fill="none" stroke="#c8c8c8" stroke-width=".6"/></g><g transform="translate(7 391.42)"><path d="M-3.600 0c1.600-2.700 5.600-2.700 7.200 0c-1.600 2.700-5.600 2.700-7.200 0z" fill="none" stroke="#c8c8c8" stroke-width=".8"/><circle cx="0" cy="0" r="1.200" fill="#c8c8c8"/></g><g transform="translate(15.4 391.42)"><path d="M-3.400-1.100h1.400l2-1.900v6l-2-1.900h-1.400z" fill="#c8c8c8"/><path d="M1-1.600c.9 1 .9 2.200 0 3.200M2.200-2.800c1.600 1.700 1.600 3.900 0 5.600" fill="none" stroke="#c8c8c8" stroke-width=".7"/></g><g transform="translate(43 391.42)"><path d="M-1-2l2 2l-2 2" fill="none" stroke="#a8a8a8" stroke-width=".8"/></g><g transform="translate(154 391.42)"><circle cx="0" cy="-2.500" r=".9" fill="#c8c8c8"/><path d="M0-2v4.600M-3.600 2.800h7.200" stroke="#c8c8c8" stroke-width=".8" fill="none"/><path d="M-.5-1c-2.200 0-3 1.200-3 2.300c0 1 .8 1.500 1.700 1.500M.5-1c2.200 0 3 1.200 3 2.300c0 1-.8 1.500-1.700 1.500" stroke="#c8c8c8" stroke-width=".8" fill="none"/></g><g transform="translate(171.2 391.42)"><path d="M-2.600 2.800l5.200-5.600" stroke="#c8c8c8" stroke-width=".8"/></g><g transform="translate(231.3 391.42)"><path d="M2.600 .2a2.600 2.600 0 1 0-1 2.100" fill="none" stroke="#c8c8c8" stroke-width=".7"/><circle cx="0" cy=".1" r="1" fill="none" stroke="#c8c8c8" stroke-width=".6"/><path d="M2.600-.8v1.800c0 .8.800.8 1.200.4" fill="none" stroke="#c8c8c8" stroke-width=".6"/></g><g transform="translate(7 400.95)"><path d="M-3.600 0c1.600-2.700 5.600-2.700 7.200 0c-1.600 2.700-5.600 2.700-7.200 0z" fill="none" stroke="#c8c8c8" stroke-width=".8"/><circle cx="0" cy="0" r="1.200" fill="#c8c8c8"/></g><g transform="translate(15.4 400.95)"><path d="M-3.400-1.100h1.400l2-1.900v6l-2-1.900h-1.400z" fill="#c8c8c8"/><path d="M1-1.600c.9 1 .9 2.200 0 3.200M2.200-2.800c1.600 1.700 1.600 3.900 0 5.600" fill="none" stroke="#c8c8c8" stroke-width=".7"/></g><g transform="translate(43 400.95)"><path d="M-1-2l2 2l-2 2" fill="none" stroke="#a8a8a8" stroke-width=".8"/></g><g transform="translate(154 400.95)"><circle cx="0" cy="-2.500" r=".9" fill="#c8c8c8"/><path d="M0-2v4.600M-3.600 2.800h7.200" stroke="#c8c8c8" stroke-width=".8" fill="none"/><path d="M-.5-1c-2.200 0-3 1.200-3 2.300c0 1 .8 1.500 1.700 1.500M.5-1c2.200 0 3 1.200 3 2.300c0 1-.8 1.500-1.700 1.500" stroke="#c8c8c8" stroke-width=".8" fill="none"/></g><g transform="translate(171.2 400.95)"><path d="M-2.600 2.800l5.200-5.600" stroke="#c8c8c8" stroke-width=".8"/></g><g transform="translate(231.3 400.95)"><path d="M2.600 .2a2.600 2.600 0 1 0-1 2.100" fill="none" stroke="#c8c8c8" stroke-width=".7"/><circle cx="0" cy=".1" r="1" fill="none" stroke="#c8c8c8" stroke-width=".6"/><path d="M2.600-.8v1.800c0 .8.800.8 1.200.4" fill="none" stroke="#c8c8c8" stroke-width=".6"/></g><g transform="translate(7 410.48)"><path d="M-3.600 0c1.600-2.700 5.600-2.700 7.200 0c-1.600 2.700-5.600 2.700-7.200 0z" fill="none" stroke="#c8c8c8" stroke-width=".8"/><circle cx="0" cy="0" r="1.200" fill="#c8c8c8"/></g><g transform="translate(15.4 410.48)"><path d="M-3.400-1.100h1.400l2-1.900v6l-2-1.900h-1.400z" fill="#c8c8c8"/><path d="M1-1.600c.9 1 .9 2.200 0 3.200M2.200-2.800c1.600 1.700 1.600 3.900 0 5.600" fill="none" stroke="#c8c8c8" stroke-width=".7"/></g><g transform="translate(43 410.48)"><path d="M-1-2l2 2l-2 2" fill="none" stroke="#a8a8a8" stroke-width=".8"/></g><g transform="translate(154 410.48)"><circle cx="0" cy="-2.500" r=".9" fill="#c8c8c8"/><path d="M0-2v4.600M-3.600 2.800h7.200" stroke="#c8c8c8" stroke-width=".8" fill="none"/><path d="M-.5-1c-2.200 0-3 1.200-3 2.300c0 1 .8 1.500 1.700 1.500M.5-1c2.200 0 3 1.200 3 2.300c0 1-.8 1.500-1.700 1.500" stroke="#c8c8c8" stroke-width=".8" fill="none"/></g><g transform="translate(171.2 410.48)"><path d="M-2.600 2.800l5.200-5.600" stroke="#c8c8c8" stroke-width=".8"/></g><g transform="translate(231.3 410.48)"><path d="M2.600 .2a2.600 2.600 0 1 0-1 2.100" fill="none" stroke="#c8c8c8" stroke-width=".7"/><circle cx="0" cy=".1" r="1" fill="none" stroke="#c8c8c8" stroke-width=".6"/><path d="M2.600-.8v1.800c0 .8.800.8 1.200.4" fill="none" stroke="#c8c8c8" stroke-width=".6"/></g><g transform="translate(7 420.01)"><path d="M-3.600 0c1.600-2.700 5.600-2.700 7.200 0c-1.600 2.700-5.600 2.700-7.200 0z" fill="none" stroke="#c8c8c8" stroke-width=".8"/><circle cx="0" cy="0" r="1.200" fill="#c8c8c8"/></g><g transform="translate(15.4 420.01)"><path d="M-3.400-1.100h1.400l2-1.900v6l-2-1.900h-1.400z" fill="#c8c8c8"/><path d="M1-1.600c.9 1 .9 2.200 0 3.200M2.200-2.800c1.600 1.700 1.600 3.900 0 5.600" fill="none" stroke="#c8c8c8" stroke-width=".7"/></g><g transform="translate(43 420.01)"><path d="M-1-2l2 2l-2 2" fill="none" stroke="#a8a8a8" stroke-width=".8"/></g><g transform="translate(154 420.01)"><circle cx="0" cy="-2.500" r=".9" fill="#c8c8c8"/><path d="M0-2v4.600M-3.600 2.800h7.200" stroke="#c8c8c8" stroke-width=".8" fill="none"/><path d="M-.5-1c-2.200 0-3 1.200-3 2.300c0 1 .8 1.500 1.700 1.500M.5-1c2.200 0 3 1.200 3 2.300c0 1-.8 1.500-1.700 1.500" stroke="#c8c8c8" stroke-width=".8" fill="none"/></g><g transform="translate(171.2 420.01)"><path d="M-2.600 2.800l5.200-5.600" stroke="#c8c8c8" stroke-width=".8"/></g><g transform="translate(231.3 420.01)"><path d="M2.600 .2a2.600 2.600 0 1 0-1 2.100" fill="none" stroke="#c8c8c8" stroke-width=".7"/><circle cx="0" cy=".1" r="1" fill="none" stroke="#c8c8c8" stroke-width=".6"/><path d="M2.600-.8v1.800c0 .8.800.8 1.200.4" fill="none" stroke="#c8c8c8" stroke-width=".6"/></g><g transform="translate(7 429.54)"><path d="M-3.600 0c1.600-2.700 5.600-2.700 7.200 0c-1.600 2.700-5.600 2.700-7.200 0z" fill="none" stroke="#c8c8c8" stroke-width=".8"/><circle cx="0" cy="0" r="1.200" fill="#c8c8c8"/></g><g transform="translate(15.4 429.54)"><path d="M-3.400-1.100h1.400l2-1.900v6l-2-1.900h-1.400z" fill="#c8c8c8"/><path d="M1-1.600c.9 1 .9 2.200 0 3.200M2.200-2.800c1.600 1.700 1.600 3.900 0 5.600" fill="none" stroke="#c8c8c8" stroke-width=".7"/></g><g transform="translate(43 429.54)"><path d="M-1-2l2 2l-2 2" fill="none" stroke="#a8a8a8" stroke-width=".8"/></g><g transform="translate(154 429.54)"><circle cx="0" cy="-2.500" r=".9" fill="#c8c8c8"/><path d="M0-2v4.600M-3.600 2.800h7.200" stroke="#c8c8c8" stroke-width=".8" fill="none"/><path d="M-.5-1c-2.200 0-3 1.200-3 2.300c0 1 .8 1.500 1.700 1.500M.5-1c2.200 0 3 1.200 3 2.300c0 1-.8 1.500-1.700 1.500" stroke="#c8c8c8" stroke-width=".8" fill="none"/></g><g transform="translate(171.2 429.54)"><path d="M-2.600 2.800l5.200-5.600" stroke="#c8c8c8" stroke-width=".8"/></g><g transform="translate(231.3 429.54)"><path d="M2.600 .2a2.600 2.600 0 1 0-1 2.100" fill="none" stroke="#c8c8c8" stroke-width=".7"/><circle cx="0" cy=".1" r="1" fill="none" stroke="#c8c8c8" stroke-width=".6"/><path d="M2.600-.8v1.800c0 .8.800.8 1.200.4" fill="none" stroke="#c8c8c8" stroke-width=".6"/></g><g transform="translate(7 439.07)"><path d="M-3.600 0c1.600-2.700 5.600-2.700 7.200 0c-1.600 2.700-5.600 2.700-7.200 0z" fill="none" stroke="#c8c8c8" stroke-width=".8"/><circle cx="0" cy="0" r="1.200" fill="#c8c8c8"/></g><g transform="translate(15.4 439.07)"><path d="M-3.400-1.100h1.400l2-1.900v6l-2-1.900h-1.400z" fill="#c8c8c8"/><path d="M1-1.600c.9 1 .9 2.200 0 3.200M2.200-2.800c1.600 1.700 1.600 3.900 0 5.600" fill="none" stroke="#c8c8c8" stroke-width=".7"/></g><g transform="translate(43 439.07)"><path d="M-1-2l2 2l-2 2" fill="none" stroke="#a8a8a8" stroke-width=".8"/></g><g transform="translate(154 439.07)"><circle cx="0" cy="-2.500" r=".9" fill="#c8c8c8"/><path d="M0-2v4.600M-3.600 2.800h7.200" stroke="#c8c8c8" stroke-width=".8" fill="none"/><path d="M-.5-1c-2.200 0-3 1.200-3 2.300c0 1 .8 1.500 1.700 1.500M.5-1c2.200 0 3 1.200 3 2.300c0 1-.8 1.500-1.700 1.500" stroke="#c8c8c8" stroke-width=".8" fill="none"/></g><g transform="translate(171.2 439.07)"><path d="M-2.600 2.800l5.200-5.600" stroke="#c8c8c8" stroke-width=".8"/></g><g transform="translate(231.3 439.07)"><path d="M2.600 .2a2.600 2.600 0 1 0-1 2.100" fill="none" stroke="#c8c8c8" stroke-width=".7"/><circle cx="0" cy=".1" r="1" fill="none" stroke="#c8c8c8" stroke-width=".6"/><path d="M2.600-.8v1.800c0 .8.800.8 1.200.4" fill="none" stroke="#c8c8c8" stroke-width=".6"/></g><g transform="translate(7 448.6)"><path d="M-3.600 0c1.600-2.700 5.600-2.700 7.200 0c-1.600 2.700-5.600 2.700-7.200 0z" fill="none" stroke="#c8c8c8" stroke-width=".8"/><circle cx="0" cy="0" r="1.200" fill="#c8c8c8"/></g><g transform="translate(15.4 448.6)"><path d="M-3.400-1.100h1.400l2-1.900v6l-2-1.900h-1.400z" fill="#c8c8c8"/><path d="M1-1.600c.9 1 .9 2.200 0 3.200M2.200-2.800c1.600 1.700 1.600 3.900 0 5.600" fill="none" stroke="#c8c8c8" stroke-width=".7"/></g><g transform="translate(43 448.6)"><path d="M-1-2l2 2l-2 2" fill="none" stroke="#a8a8a8" stroke-width=".8"/></g><g transform="translate(154 448.6)"><circle cx="0" cy="-2.500" r=".9" fill="#c8c8c8"/><path d="M0-2v4.600M-3.600 2.800h7.200" stroke="#c8c8c8" stroke-width=".8" fill="none"/><path d="M-.5-1c-2.200 0-3 1.200-3 2.300c0 1 .8 1.500 1.700 1.500M.5-1c2.200 0 3 1.200 3 2.300c0 1-.8 1.500-1.700 1.500" stroke="#c8c8c8" stroke-width=".8" fill="none"/></g><g transform="translate(171.2 448.6)"><path d="M-2.600 2.800l5.200-5.600" stroke="#c8c8c8" stroke-width=".8"/></g><g transform="translate(231.3 448.6)"><path d="M2.600 .2a2.600 2.600 0 1 0-1 2.100" fill="none" stroke="#c8c8c8" stroke-width=".7"/><circle cx="0" cy=".1" r="1" fill="none" stroke="#c8c8c8" stroke-width=".6"/><path d="M2.600-.8v1.800c0 .8.800.8 1.200.4" fill="none" stroke="#c8c8c8" stroke-width=".6"/></g><g transform="translate(53.8 362.83)"><path d="M-2 -1l2 2l2-2" fill="none" stroke="#a8a8a8" stroke-width=".8"/></g><g transform="translate(71.8 372.36)"><circle cx="0" cy=".5" r="2.600" fill="none" stroke="#b8b8b8" stroke-width=".8"/><path d="M-1-3.300h2M0-3.300v1.200" stroke="#b8b8b8" stroke-width=".8"/></g><g transform="translate(238 372.36)"><path d="M2.600 .2a2.600 2.600 0 1 0-1 2.100" fill="none" stroke="#b8b8b8" stroke-width=".7"/><circle cx="0" cy=".1" r="1" fill="none" stroke="#b8b8b8" stroke-width=".6"/><path d="M2.600-.8v1.800c0 .8.800.8 1.200.4" fill="none" stroke="#b8b8b8" stroke-width=".6"/></g><g transform="translate(62.7 381.89)"><path d="M-1-2l2 2l-2 2" fill="none" stroke="#a8a8a8" stroke-width=".8"/></g></svg>
<div style="left:1px;top:447.3px;width:298.5px;height:5.7px;background:#262626;"></div>
<div style="left:1px;top:446.9px;width:298.5px;height:0.5px;background:#161616;"></div>
<div class="t" style="left:152px;top:446px;height:10px;line-height:10px;font-size:6.2px;color:#a8a8a8;transform:translate(0.5px,0.2px) scaleY(1.12) rotate(.03deg);letter-spacing:-0.1px;">Toggle Switches / Modes</div>
<svg style="left:1.5px;top:447.5px;" width="40" height="7" viewBox="0 0 40 7"><path d="M2 3.500l3 1.500l3-1.500l-3-1.500z" fill="#4a9ff2"/><path d="M2 5.500l3 1.500l3-1.500" fill="none" stroke="#4a9ff2" stroke-width=".7"/><circle cx="16" cy="4.500" r="2.600" fill="none" stroke="#b0b0b0" stroke-width=".8"/><path d="M16 2.500v2h1.600" stroke="#b0b0b0" stroke-width=".6" fill="none"/><path d="M24 2.500h4v4.500h-4zM25 2.500l-1-1.500M27 2.500l1-1.500" fill="none" stroke="#b0b0b0" stroke-width=".7"/></svg>
<div style="left:299.5px;top:320px;width:0.8px;height:133px;background:#141414;"></div>
<div style="left:300.3px;top:321.1px;width:496.7px;height:4.8px;background:#6b6b6b;border-radius:2px 0 0 2px;"></div>
<div style="left:300.3px;top:321.1px;width:2.6px;height:4.8px;background:#2d8ceb;border-radius:2.400px 0 0 2.400px;"></div>
<div style="left:795.2px;top:321.1px;width:2.4px;height:4.8px;background:#2d8ceb;border-radius:0 2.400px 2.400px 0;"></div>
<div style="left:304.2px;top:332.8px;width:0.6px;height:4px;background:#8a8a8a;"></div>
<div class="t" style="left:297px;top:325px;height:10px;line-height:10px;font-size:5.6px;color:#a0a0a0;transform:translate(0.2px,0.6px) scaleY(1.12) rotate(.03deg);letter-spacing:-0.05px;width:20px;clip-path:inset(0 0 0 3.200px);">0:00s</div>
<div style="left:383.8px;top:332.8px;width:0.6px;height:4px;background:#8a8a8a;"></div>
<div class="t" style="left:375px;top:325px;height:10px;line-height:10px;font-size:5.6px;color:#a0a0a0;transform:translate(0.8px,0.6px) scaleY(1.12) rotate(.03deg);letter-spacing:-0.05px;">00:15s</div>
<div style="left:463.4px;top:332.8px;width:0.6px;height:4px;background:#8a8a8a;"></div>
<div class="t" style="left:455px;top:325px;height:10px;line-height:10px;font-size:5.6px;color:#a0a0a0;transform:translate(0.4px,0.6px) scaleY(1.12) rotate(.03deg);letter-spacing:-0.05px;">00:30s</div>
<div style="left:543px;top:332.8px;width:0.6px;height:4px;background:#8a8a8a;"></div>
<div class="t" style="left:535px;top:325px;height:10px;line-height:10px;font-size:5.6px;color:#a0a0a0;transform:translate(0px,0.6px) scaleY(1.12) rotate(.03deg);letter-spacing:-0.05px;">00:45s</div>
<div style="left:622.6px;top:332.8px;width:0.6px;height:4px;background:#8a8a8a;"></div>
<div class="t" style="left:614px;top:325px;height:10px;line-height:10px;font-size:5.6px;color:#a0a0a0;transform:translate(0.6px,0.6px) scaleY(1.12) rotate(.03deg);letter-spacing:-0.05px;">01:00s</div>
<div style="left:702.2px;top:332.8px;width:0.6px;height:4px;background:#8a8a8a;"></div>
<div class="t" style="left:694px;top:325px;height:10px;line-height:10px;font-size:5.6px;color:#a0a0a0;transform:translate(0.2px,0.6px) scaleY(1.12) rotate(.03deg);letter-spacing:-0.05px;">01:15s</div>
<div style="left:781.8px;top:332.8px;width:0.6px;height:4px;background:#8a8a8a;"></div>
<div class="t" style="left:773px;top:325px;height:10px;line-height:10px;font-size:5.6px;color:#a0a0a0;transform:translate(0.8px,0.6px) scaleY(1.12) rotate(.03deg);letter-spacing:-0.05px;">01:30s</div>
<div style="left:300.3px;top:337px;width:499.7px;height:0.6px;background:#151515;"></div>
<div style="left:300.3px;top:337.6px;width:496.7px;height:8px;background:#686868;"></div>
<div style="left:300.3px;top:337.6px;width:2.6px;height:8px;background:#2d8ceb;border-radius:2px 0 0 2px;"></div>
<div style="left:795px;top:337.6px;width:2.6px;height:8px;background:#2d8ceb;border-radius:0 2px 2px 0;"></div>
<div style="left:300.3px;top:345.6px;width:496.7px;height:3px;background:#1c1c1c;"></div>
<div style="left:408.5px;top:346.6px;width:1px;height:1.2px;background:#2fd04a;"></div>
<div style="left:417.5px;top:346.6px;width:1px;height:1.2px;background:#2fd04a;"></div>
<div style="left:489px;top:346.6px;width:1px;height:1.2px;background:#2fd04a;"></div>
<div style="left:491.5px;top:346.6px;width:1px;height:1.2px;background:#2fd04a;"></div>
<div style="left:493.5px;top:346.6px;width:1px;height:1.2px;background:#2fd04a;"></div>
<div style="left:496.5px;top:346.6px;width:1px;height:1.2px;background:#2fd04a;"></div>
<div style="left:689.5px;top:346.6px;width:1px;height:1.2px;background:#2fd04a;"></div>
<div style="left:487.5px;top:347px;width:11px;height:0.6px;background:#2a9a3a;"></div>
<div style="left:300.3px;top:348.2px;width:496.7px;height:99px;background:#252525;"></div>
<div style="left:300.3px;top:348.99px;width:4.2px;height:8.63px;background:#2c2c2c;"></div>
<div style="left:304.5px;top:348.99px;width:492.5px;height:8.63px;background:#3c3c3c;"></div>
<div style="left:300.3px;top:358.51px;width:4.2px;height:8.63px;background:#2c2c2c;"></div>
<div style="left:304.5px;top:358.51px;width:492.5px;height:8.63px;background:#353535;"></div>
<div style="left:300.3px;top:368.05px;width:4.2px;height:8.63px;background:#2c2c2c;"></div>
<div style="left:304.5px;top:368.05px;width:492.5px;height:8.63px;background:#353535;"></div>
<div style="left:300.3px;top:377.57px;width:4.2px;height:8.63px;background:#2c2c2c;"></div>
<div style="left:304.5px;top:377.57px;width:492.5px;height:8.63px;background:#262626;"></div>
<div style="left:300.3px;top:387.11px;width:4.2px;height:8.63px;background:#2c2c2c;"></div>
<div style="left:304.5px;top:387.11px;width:492.5px;height:8.63px;background:#3c3c3c;"></div>
<div style="left:300.3px;top:396.63px;width:4.2px;height:8.63px;background:#2c2c2c;"></div>
<div style="left:304.5px;top:396.63px;width:492.5px;height:8.63px;background:#3c3c3c;"></div>
<div style="left:300.3px;top:406.17px;width:4.2px;height:8.63px;background:#2c2c2c;"></div>
<div style="left:304.5px;top:406.17px;width:492.5px;height:8.63px;background:#3c3c3c;"></div>
<div style="left:300.3px;top:415.69px;width:4.2px;height:8.63px;background:#2c2c2c;"></div>
<div style="left:304.5px;top:415.69px;width:492.5px;height:8.63px;background:#3c3c3c;"></div>
<div style="left:300.3px;top:425.23px;width:4.2px;height:8.63px;background:#444;"></div>
<div style="left:304.5px;top:425.23px;width:492.5px;height:8.63px;background:#515151;"></div>
<div style="left:300.3px;top:434.75px;width:4.2px;height:8.63px;background:#2c2c2c;"></div>
<div style="left:304.5px;top:434.75px;width:492.5px;height:8.63px;background:#3c3c3c;"></div>
<div style="left:300.3px;top:444.29px;width:4.2px;height:8.63px;background:#2c2c2c;"></div>
<div style="left:304.5px;top:444.29px;width:492.5px;height:8.63px;background:#3c3c3c;"></div>
<div style="left:352px;top:349.04px;width:445px;height:8.53px;background:#7b867c;border-radius:1.500px 1.500px 0 0;"></div>
<div style="left:304.5px;top:387.16px;width:63.3px;height:8.53px;background:#6f6654;border-radius:1.500px 1.500px 0 0;"></div>
<div style="left:352px;top:396.69px;width:36.8px;height:8.53px;background:#6f6654;border-radius:1.500px 1.500px 0 0;"></div>
<div style="left:388.8px;top:406.22px;width:37.4px;height:8.53px;background:#6f6654;border-radius:1.500px 1.500px 0 0;"></div>
<div style="left:426.2px;top:415.75px;width:43px;height:8.53px;background:#6f6654;border-radius:1.500px 1.500px 0 0;"></div>
<div style="left:469.2px;top:425.28px;width:58.2px;height:8.53px;background:#b8a88a;border-radius:1.500px 1.500px 0 0;box-shadow:inset 0 0 0 .7px #d0c0a2;"></div>
<div style="left:527.4px;top:434.81px;width:63.9px;height:8.53px;background:#6f6654;border-radius:1.500px 1.500px 0 0;"></div>
<div style="left:591.3px;top:444.34px;width:26px;height:8.53px;background:#6f6654;border-radius:1.500px 1.500px 0 0;"></div>
<div style="left:793.4px;top:348.6px;width:3.6px;height:98.3px;background:rgba(0,0,0,.18);"></div>
<svg style="left:492.3px;top:360.03px;" width="4.4" height="5.6" viewBox="0 0 4.4 5.6"><path d="M.6 .4h3.200M.6 5.200h3.200M2.200 .4v4.800" stroke="#b4b4b4" stroke-width=".7"/></svg>
<svg style="left:492.3px;top:369.56px;" width="4.4" height="5.6" viewBox="0 0 4.4 5.6"><path d="M.6 .4h3.200M.6 5.200h3.200M2.200 .4v4.800" stroke="#b4b4b4" stroke-width=".7"/></svg>
<div style="left:300.3px;top:447.3px;width:508px;height:5.7px;background:#262626;"></div>
<div style="left:300.3px;top:446.9px;width:508px;height:0.5px;background:#161616;"></div>
<svg style="left:302px;top:448.5px;" width="60" height="5" viewBox="0 0 60 5"><path d="M2.300 4.500l1.500-2l1.500 2z" fill="#9a9a9a"/><path d="M17 3h22" stroke="#4a4a4a" stroke-width=".8"/><circle cx="15.700" cy="3.200" r="1.900" fill="#262626" stroke="#b0b0b0" stroke-width=".8"/><path d="M47 4.500l2.200-3l1.600 2l1.200-1.300l1.800 2.300z" fill="#9a9a9a"/></svg>
<div style="left:797px;top:317px;width:11px;height:136px;background:#262626;"></div>
<div style="left:797.6px;top:348.2px;width:10.4px;height:104.8px;background:#1e1e1e;"></div>
<svg style="left:798px;top:336px;" width="10" height="12" viewBox="0 0 10 12"><path d="M1.600 1.400h6.400v6l-3.200 3l-3.200-3z" fill="#c8c8c8"/></svg>
<svg style="left:797px;top:348.5px;" width="11" height="10" viewBox="0 0 11 10"><path d="M2 6l3.400-3.800c1-.8 2 0 1.400 1l-2 2.600h4.200v1.400h-1.400v1.400h-4.400z" fill="#c8c8c8"/></svg>
<div style="left:798.9px;top:358.5px;width:7.4px;height:52px;background:#303030;border-radius:3.700px;"></div>
<div style="left:494px;top:333px;width:0.9px;height:114px;background:#4a9ff2;"></div>
<svg style="left:490.4px;top:331.8px;" width="8" height="6.5" viewBox="0 0 8 6.5"><path d="M.5 .4h7v3l-3.500 2.800l-3.500-2.800z" fill="#4a9ff2"/><path d="M2.600 1.200v2.800M5.400 1.200v2.800" stroke="#1c5fa8" stroke-width=".5"/></svg>
</div></body></html>
